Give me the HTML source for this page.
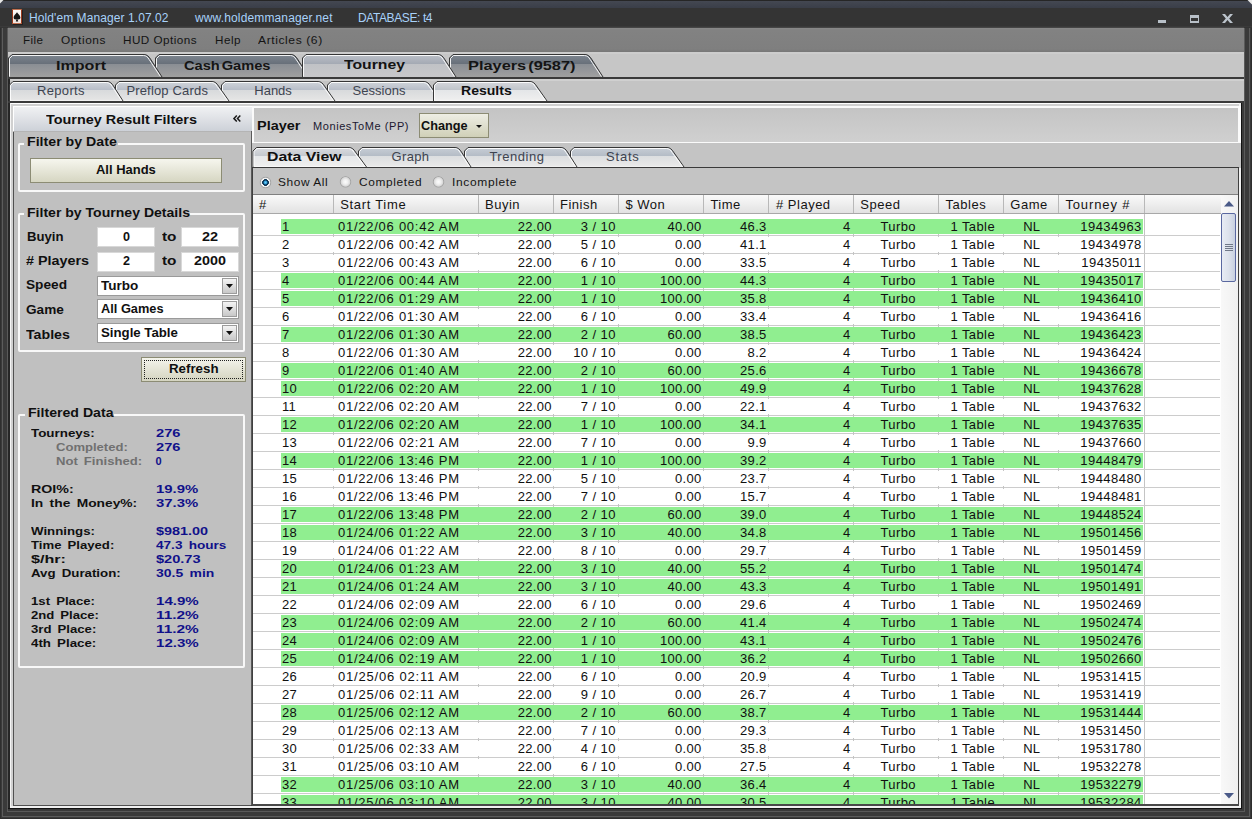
<!DOCTYPE html>
<html><head><meta charset="utf-8"><style>
html,body{margin:0;padding:0;width:1252px;height:819px;overflow:hidden;background:#3a3a3a}
body{position:relative;font-family:'Liberation Sans', sans-serif}
div{position:absolute}
svg{position:absolute}
</style></head><body>
<div style="left:0px;top:0px;width:1252px;height:819px;background:#3a3a3a"></div><div style="left:0px;top:0px;width:1252px;height:1px;background:#262626"></div><div style="left:0px;top:1px;width:1252px;height:7px;background:linear-gradient(#444852,#3a3e48)"></div><div style="left:0px;top:8px;width:1252px;height:20px;background:#343434"></div><div style="left:0px;top:28px;width:1px;height:791px;background:#2e2e2e"></div><div style="left:2px;top:28px;width:1px;height:789px;background:#5c5c5c"></div><div style="left:2px;top:816px;width:1248px;height:1px;background:#5c5c5c"></div><div style="left:1249px;top:28px;width:1px;height:789px;background:#5c5c5c"></div><div style="left:7px;top:28px;width:1px;height:784px;background:#5a5a5a"></div><div style="left:7px;top:811px;width:1238px;height:1px;background:#5a5a5a"></div><div style="left:1244px;top:28px;width:1px;height:784px;background:#5a5a5a"></div><div style="left:1251px;top:28px;width:1px;height:791px;background:#2e2e2e"></div><div style="left:0px;top:818px;width:1252px;height:1px;background:#2e2e2e"></div><div style="left:8px;top:28px;width:2px;height:781px;background:#262626"></div><div style="left:8px;top:808px;width:1234px;height:1px;background:#121212"></div><svg style="position:absolute;left:0;top:0" width="4" height="4"><path d="M0 0 L3.5 0 L0 3.5Z" fill="#e8e8e8"/></svg><svg style="position:absolute;left:1247px;top:0" width="5" height="5"><path d="M0.5 0 L5 0 L5 4.5Z" fill="#e8e8e8"/></svg><div style="left:13px;top:10px;width:10px;height:15px;background:#1a1a1a;opacity:0.7"></div><div style="left:12px;top:9px;width:10px;height:15px;background:linear-gradient(#fbf8f6,#f2e6e0);border-left:1px solid #9a3a1c;border-right:1px solid #9a3a1c;border-top:1px solid #c07050;border-bottom:1px solid #c07050;box-sizing:border-box"></div><svg style="position:absolute;left:12px;top:9px" width="10" height="15" viewBox="0 0 10 15"><path d="M5 3.2 C4 4.8 1.6 6.2 1.6 8.6 C1.6 10.3 3.3 11 4.5 10.1 L3.8 12.6 L6.2 12.6 L5.5 10.1 C6.7 11 8.4 10.3 8.4 8.6 C8.4 6.2 6 4.8 5 3.2Z" fill="#141414"/></svg><div style="left:29.00px;top:12px;font:12px/12px 'Liberation Sans', sans-serif;color:#a8d2fa;letter-spacing:0.081px;white-space:pre;">Hold&#x27;em Manager 1.07.02</div><div style="left:195.00px;top:12px;font:12px/12px 'Liberation Sans', sans-serif;color:#a8d2fa;letter-spacing:0.138px;white-space:pre;">www.holdemmanager.net</div><div style="left:358.00px;top:12px;font:12px/12px 'Liberation Sans', sans-serif;color:#a8d2fa;letter-spacing:-0.402px;white-space:pre;">DATABASE: t4</div><div style="left:1158px;top:20px;width:8px;height:3px;background:#b8c0c8"></div><div style="left:1190px;top:15px;width:9px;height:8px;border:1px solid #b8c0c8;border-top-width:3px;border-bottom-width:2px;box-sizing:border-box"></div><svg style="position:absolute;left:1222px;top:14px" width="11" height="9" viewBox="0 0 11 9"><path d="M0 0 L3 0 L5.5 3 L8 0 L11 0 L7.2 4.5 L11 9 L8 9 L5.5 6 L3 9 L0 9 L3.8 4.5Z" fill="#bcc4cc"/></svg><div style="left:8px;top:28px;width:1236px;height:24px;background:linear-gradient(#8a8a8a 0,#828282 2px,#7f7f7f 21px,#777777 24px)"></div><div style="left:0px;top:26px;width:1252px;height:1px;background:#3a3a3a"></div><div style="left:8px;top:27px;width:1236px;height:1px;background:#464646"></div><div style="left:23.40px;top:35px;font:11px/11px 'Liberation Sans', sans-serif;color:#141414;letter-spacing:0.361px;white-space:pre;transform:scaleX(1.0575);transform-origin:0 0;">File</div><div style="left:60.90px;top:35px;font:11px/11px 'Liberation Sans', sans-serif;color:#141414;letter-spacing:0.548px;white-space:pre;transform:scaleX(1.0798);transform-origin:0 0;">Options</div><div style="left:123.30px;top:35px;font:11px/11px 'Liberation Sans', sans-serif;color:#141414;letter-spacing:0.435px;white-space:pre;transform:scaleX(1.0629);transform-origin:0 0;">HUD Options</div><div style="left:214.60px;top:35px;font:11px/11px 'Liberation Sans', sans-serif;color:#141414;letter-spacing:0.479px;white-space:pre;transform:scaleX(1.0597);transform-origin:0 0;">Help</div><div style="left:258.20px;top:35px;font:11px/11px 'Liberation Sans', sans-serif;color:#141414;letter-spacing:0.529px;white-space:pre;transform:scaleX(1.0997);transform-origin:0 0;">Articles (6)</div><div style="left:8px;top:52px;width:1236px;height:25px;background:#c6c6c6"></div><div style="left:8px;top:52px;width:1236px;height:2px;background:#cccccc"></div><div style="left:8px;top:77px;width:1236px;height:2px;background:#3a3a3a"></div><div style="left:10px;top:79px;width:1234px;height:22px;background:#c4c4c4"></div><div style="left:10px;top:79px;width:1234px;height:2px;background:#d0d0d0"></div><div style="left:8px;top:101px;width:1236px;height:2px;background:#3a3a3a"></div><svg style="position:absolute;left:0px;top:54px" width="700" height="23" viewBox="0 0 700 23"><defs><linearGradient id="gu54" x1="0" y1="0" x2="0" y2="1"><stop offset="0" stop-color="#7e8690"/><stop offset="0.41" stop-color="#68707a"/><stop offset="0.43" stop-color="#8a8e94"/><stop offset="1" stop-color="#a0a0a0"/></linearGradient><linearGradient id="gs54" x1="0" y1="0" x2="0" y2="1"><stop offset="0" stop-color="#bcc0c8"/><stop offset="0.41" stop-color="#a4aab4"/><stop offset="0.43" stop-color="#c0c2c6"/><stop offset="1" stop-color="#c8c8ca"/></linearGradient></defs><path d="M449.5,23 L449.5,4.0 L453.0,0.5 L585,0.5 C588,0.5 590,2.5 591.5,5 L603,23 Z" fill="url(#gu54)"/><path d="M449.5,23 L449.5,4.0 L453.0,0.5 L585,0.5 C588,0.5 590,2.5 591.5,5 L603,23" fill="none" stroke="#363636" stroke-width="1"/><path d="M450.5,22.5 L450.5,4.5 L453.5,1.5 L584.5,1.5 C587,1.5 588.8,3.2 590.2,5.6 L601.4,22.5" fill="none" stroke="#ffffff" stroke-opacity="0.9" stroke-width="1"/><path d="M155.5,23 L155.5,4.0 L159.0,0.5 L291,0.5 C294,0.5 296,2.5 297.5,5 L309,23 Z" fill="url(#gu54)"/><path d="M155.5,23 L155.5,4.0 L159.0,0.5 L291,0.5 C294,0.5 296,2.5 297.5,5 L309,23" fill="none" stroke="#363636" stroke-width="1"/><path d="M156.5,22.5 L156.5,4.5 L159.5,1.5 L290.5,1.5 C293,1.5 294.8,3.2 296.2,5.6 L307.4,22.5" fill="none" stroke="#ffffff" stroke-opacity="0.9" stroke-width="1"/><path d="M8.5,23 L8.5,4.0 L12.0,0.5 L144,0.5 C147,0.5 149,2.5 150.5,5 L162,23 Z" fill="url(#gu54)"/><path d="M8.5,23 L8.5,4.0 L12.0,0.5 L144,0.5 C147,0.5 149,2.5 150.5,5 L162,23" fill="none" stroke="#363636" stroke-width="1"/><path d="M9.5,22.5 L9.5,4.5 L12.5,1.5 L143.5,1.5 C146,1.5 147.8,3.2 149.2,5.6 L160.4,22.5" fill="none" stroke="#ffffff" stroke-opacity="0.9" stroke-width="1"/><path d="M302.5,23 L302.5,4.0 L306.0,0.5 L438,0.5 C441,0.5 443,2.5 444.5,5 L456,23 Z" fill="url(#gs54)"/><path d="M302.5,23 L302.5,4.0 L306.0,0.5 L438,0.5 C441,0.5 443,2.5 444.5,5 L456,23" fill="none" stroke="#363636" stroke-width="1"/><path d="M303.5,22.5 L303.5,4.5 L306.5,1.5 L437.5,1.5 C440,1.5 441.8,3.2 443.2,5.6 L454.4,22.5" fill="none" stroke="#ffffff" stroke-opacity="0.9" stroke-width="1"/></svg><div style="left:55.80px;top:59px;font:bold 13px/13px 'Liberation Sans', sans-serif;color:#141414;letter-spacing:0.000px;white-space:pre;transform:scaleX(1.2385);transform-origin:0 0;">Import</div><div style="left:184.30px;top:59px;font:bold 13px/13px 'Liberation Sans', sans-serif;color:#141414;letter-spacing:0.000px;white-space:pre;word-spacing:-2px;transform:scaleX(1.1268);transform-origin:0 0;">Cash Games</div><div style="left:343.60px;top:58px;font:bold 13px/13px 'Liberation Sans', sans-serif;color:#141414;letter-spacing:0.000px;white-space:pre;transform:scaleX(1.2120);transform-origin:0 0;">Tourney</div><div style="left:468.30px;top:59px;font:bold 13px/13px 'Liberation Sans', sans-serif;color:#141414;letter-spacing:0.000px;white-space:pre;word-spacing:-2px;transform:scaleX(1.2580);transform-origin:0 0;">Players (9587)</div><svg style="position:absolute;left:0px;top:81px" width="700" height="20" viewBox="0 0 700 20"><defs><linearGradient id="gu81" x1="0" y1="0" x2="0" y2="1"><stop offset="0" stop-color="#d0d4da"/><stop offset="0.43" stop-color="#b8bec8"/><stop offset="0.45" stop-color="#d8dadc"/><stop offset="0.92" stop-color="#e4e4e4"/><stop offset="0.95" stop-color="#f0f0f0"/><stop offset="1" stop-color="#f0f0f0"/></linearGradient><linearGradient id="gs81" x1="0" y1="0" x2="0" y2="1"><stop offset="0" stop-color="#d6d8dc"/><stop offset="0.43" stop-color="#c0c4ca"/><stop offset="0.45" stop-color="#e4e6e8"/><stop offset="0.92" stop-color="#eeeeee"/><stop offset="0.95" stop-color="#f6f6f6"/><stop offset="1" stop-color="#f6f6f6"/></linearGradient></defs><path d="M327.5,20 L327.5,4.0 L331.0,0.5 L424,0.5 C427,0.5 429,2.5 430.5,5 L441,20 Z" fill="url(#gu81)"/><path d="M327.5,20 L327.5,4.0 L331.0,0.5 L424,0.5 C427,0.5 429,2.5 430.5,5 L441,20" fill="none" stroke="#363636" stroke-width="1"/><path d="M328.5,19.5 L328.5,4.5 L331.5,1.5 L423.5,1.5 C426,1.5 427.8,3.2 429.2,5.6 L439.4,19.5" fill="none" stroke="#ffffff" stroke-opacity="0.9" stroke-width="1"/><path d="M221.5,20 L221.5,4.0 L225.0,0.5 L318,0.5 C321,0.5 323,2.5 324.5,5 L335,20 Z" fill="url(#gu81)"/><path d="M221.5,20 L221.5,4.0 L225.0,0.5 L318,0.5 C321,0.5 323,2.5 324.5,5 L335,20" fill="none" stroke="#363636" stroke-width="1"/><path d="M222.5,19.5 L222.5,4.5 L225.5,1.5 L317.5,1.5 C320,1.5 321.8,3.2 323.2,5.6 L333.4,19.5" fill="none" stroke="#ffffff" stroke-opacity="0.9" stroke-width="1"/><path d="M115.5,20 L115.5,4.0 L119.0,0.5 L212,0.5 C215,0.5 217,2.5 218.5,5 L229,20 Z" fill="url(#gu81)"/><path d="M115.5,20 L115.5,4.0 L119.0,0.5 L212,0.5 C215,0.5 217,2.5 218.5,5 L229,20" fill="none" stroke="#363636" stroke-width="1"/><path d="M116.5,19.5 L116.5,4.5 L119.5,1.5 L211.5,1.5 C214,1.5 215.8,3.2 217.2,5.6 L227.4,19.5" fill="none" stroke="#ffffff" stroke-opacity="0.9" stroke-width="1"/><path d="M9.5,20 L9.5,4.0 L13.0,0.5 L107,0.5 C110,0.5 112,2.5 113.5,5 L123,20 Z" fill="url(#gu81)"/><path d="M9.5,20 L9.5,4.0 L13.0,0.5 L107,0.5 C110,0.5 112,2.5 113.5,5 L123,20" fill="none" stroke="#363636" stroke-width="1"/><path d="M10.5,19.5 L10.5,4.5 L13.5,1.5 L106.5,1.5 C109,1.5 110.8,3.2 112.2,5.6 L121.4,19.5" fill="none" stroke="#ffffff" stroke-opacity="0.9" stroke-width="1"/><path d="M433.5,20 L433.5,4.0 L437.0,0.5 L530,0.5 C533,0.5 535,2.5 536.5,5 L547,20 Z" fill="url(#gs81)"/><path d="M433.5,20 L433.5,4.0 L437.0,0.5 L530,0.5 C533,0.5 535,2.5 536.5,5 L547,20" fill="none" stroke="#363636" stroke-width="1"/><path d="M434.5,19.5 L434.5,4.5 L437.5,1.5 L529.5,1.5 C532,1.5 533.8,3.2 535.2,5.6 L545.4,19.5" fill="none" stroke="#ffffff" stroke-opacity="0.9" stroke-width="1"/></svg><div style="left:37.00px;top:84px;font:13px/13px 'Liberation Sans', sans-serif;color:#3e4450;letter-spacing:0.328px;white-space:pre;">Reports</div><div style="left:126.40px;top:84px;font:13px/13px 'Liberation Sans', sans-serif;color:#3e4450;letter-spacing:0.168px;white-space:pre;">Preflop Cards</div><div style="left:254.30px;top:84px;font:13px/13px 'Liberation Sans', sans-serif;color:#3e4450;letter-spacing:-0.020px;white-space:pre;">Hands</div><div style="left:352.50px;top:84px;font:13px/13px 'Liberation Sans', sans-serif;color:#3e4450;letter-spacing:0.036px;white-space:pre;">Sessions</div><div style="left:460.70px;top:84px;font:bold 13px/13px 'Liberation Sans', sans-serif;color:#101010;letter-spacing:0.000px;white-space:pre;transform:scaleX(1.0794);transform-origin:0 0;">Results</div><div style="left:10px;top:103px;width:1232px;height:702px;background:#c4c4c4"></div><div style="left:10px;top:103px;width:1232px;height:1px;background:#ffffff"></div><div style="left:10px;top:104px;width:1232px;height:2px;background:#d0d0d0"></div><div style="left:10px;top:806px;width:1232px;height:2px;background:#f0f0f0"></div><div style="left:10px;top:103px;width:1px;height:705px;background:#f4f4f4"></div><div style="left:11px;top:104px;width:2px;height:702px;background:#d0d0d0"></div><div style="left:1239px;top:103px;width:2px;height:705px;background:#f0f0f0"></div><div style="left:1241px;top:103px;width:1px;height:706px;background:#121212"></div><div style="left:13px;top:106px;width:238px;height:699px;background:#c0c0c0;border-left:1px solid #505050;box-sizing:border-box"></div><div style="left:13px;top:106px;width:239px;height:25px;background:linear-gradient(#f0f1f3,#cdd1d8);border-top:1px solid #fff;border-left:1px solid #fff;box-sizing:border-box"></div><div style="left:13px;top:131px;width:238px;height:1px;background:#b4b4b4"></div><div style="left:251px;top:131px;width:1px;height:674px;background:#5a5a5a"></div><div style="left:13px;top:805px;width:238px;height:1px;background:#505050"></div><div style="left:45.50px;top:113px;font:bold 13px/13px 'Liberation Sans', sans-serif;color:#101010;letter-spacing:0.000px;white-space:pre;transform:scaleX(1.1079);transform-origin:0 0;">Tourney Result Filters</div><svg style="position:absolute;left:233px;top:115px" width="8" height="8" viewBox="0 0 8 8"><path d="M3.8 0.6 L1 3.6 L3.8 6.6 M7.3 0.6 L4.5 3.6 L7.3 6.6" fill="none" stroke="#1a1a1a" stroke-width="1.5"/></svg><div style="left:18px;top:143px;width:227px;height:49px;border:2px solid #f8f8f8;border-radius:2px;box-sizing:border-box;border-top-color:#f8f8f8"></div><div style="left:24px;top:143px;width:94px;height:3px;background:#c0c0c0"></div><div style="left:26.50px;top:136px;font:bold 12px/12px 'Liberation Sans', sans-serif;color:#101010;letter-spacing:0.000px;white-space:pre;transform:scaleX(1.1811);transform-origin:0 0;">Filter by Date</div><div style="left:30px;top:158px;width:192px;height:25px;background:linear-gradient(#f6f6ee,#d6d6c2);border:1px solid #8c8c74;box-sizing:border-box"></div><div style="left:96.10px;top:164px;font:bold 12px/12px 'Liberation Sans', sans-serif;color:#101010;letter-spacing:0.000px;white-space:pre;transform:scaleX(1.0805);transform-origin:0 0;">All Hands</div><div style="left:18px;top:213px;width:227px;height:139px;border:2px solid #f8f8f8;border-radius:2px;box-sizing:border-box;border-top-color:#f8f8f8"></div><div style="left:24px;top:213px;width:166px;height:3px;background:#c0c0c0"></div><div style="left:26.50px;top:207px;font:bold 12px/12px 'Liberation Sans', sans-serif;color:#101010;letter-spacing:0.000px;white-space:pre;transform:scaleX(1.1713);transform-origin:0 0;">Filter by Tourney Details</div><div style="left:26.70px;top:231px;font:bold 12px/12px 'Liberation Sans', sans-serif;color:#101010;letter-spacing:0.000px;white-space:pre;transform:scaleX(1.0947);transform-origin:0 0;">Buyin</div><div style="left:26.40px;top:255px;font:bold 12px/12px 'Liberation Sans', sans-serif;color:#101010;letter-spacing:0.000px;white-space:pre;transform:scaleX(1.1950);transform-origin:0 0;"># Players</div><div style="left:97px;top:227px;width:58px;height:20px;background:#fff;border:1px solid #d8d8d8;box-sizing:border-box"></div><div style="left:122.50px;top:231px;font:bold 12px/12px 'Liberation Sans', sans-serif;color:#101010;letter-spacing:0.000px;white-space:pre;transform:scaleX(1.0467);transform-origin:0 0;">0</div><div style="left:181px;top:227px;width:58px;height:20px;background:#fff;border:1px solid #d8d8d8;box-sizing:border-box"></div><div style="left:201.95px;top:231px;font:bold 12px/12px 'Liberation Sans', sans-serif;color:#101010;letter-spacing:0.000px;white-space:pre;transform:scaleX(1.2051);transform-origin:0 0;">22</div><div style="left:97px;top:252px;width:58px;height:20px;background:#fff;border:1px solid #d8d8d8;box-sizing:border-box"></div><div style="left:122.50px;top:255px;font:bold 12px/12px 'Liberation Sans', sans-serif;color:#101010;letter-spacing:0.000px;white-space:pre;transform:scaleX(1.0467);transform-origin:0 0;">2</div><div style="left:181px;top:252px;width:58px;height:20px;background:#fff;border:1px solid #d8d8d8;box-sizing:border-box"></div><div style="left:194.05px;top:255px;font:bold 12px/12px 'Liberation Sans', sans-serif;color:#101010;letter-spacing:0.000px;white-space:pre;transform:scaleX(1.1946);transform-origin:0 0;">2000</div><div style="left:161.70px;top:231px;font:bold 12px/12px 'Liberation Sans', sans-serif;color:#101010;letter-spacing:0.000px;white-space:pre;transform:scaleX(1.2800);transform-origin:0 0;">to</div><div style="left:161.70px;top:255px;font:bold 12px/12px 'Liberation Sans', sans-serif;color:#101010;letter-spacing:0.000px;white-space:pre;transform:scaleX(1.2800);transform-origin:0 0;">to</div><div style="left:26.40px;top:279px;font:bold 12px/12px 'Liberation Sans', sans-serif;color:#101010;letter-spacing:0.000px;white-space:pre;transform:scaleX(1.1384);transform-origin:0 0;">Speed</div><div style="left:97px;top:276px;width:142px;height:20px;background:#fff;border:1px solid #9a9a9a;box-sizing:border-box"></div><div style="left:222px;top:278px;width:15px;height:16px;background:linear-gradient(#f4f4f4,#c8c8c8);border:1px solid #9c9c9c;box-sizing:border-box"></div><svg style="position:absolute;left:226px;top:284px" width="7" height="4" viewBox="0 0 7 4"><path d="M0 0 L7 0 L3.5 4Z" fill="#101010"/></svg><div style="left:100.50px;top:280px;font:bold 12px/12px 'Liberation Sans', sans-serif;color:#101010;letter-spacing:0.000px;white-space:pre;transform:scaleX(1.1266);transform-origin:0 0;">Turbo</div><div style="left:26.40px;top:304px;font:bold 12px/12px 'Liberation Sans', sans-serif;color:#101010;letter-spacing:0.000px;white-space:pre;transform:scaleX(1.1331);transform-origin:0 0;">Game</div><div style="left:97px;top:299px;width:142px;height:20px;background:#fff;border:1px solid #9a9a9a;box-sizing:border-box"></div><div style="left:222px;top:301px;width:15px;height:16px;background:linear-gradient(#f4f4f4,#c8c8c8);border:1px solid #9c9c9c;box-sizing:border-box"></div><svg style="position:absolute;left:226px;top:307px" width="7" height="4" viewBox="0 0 7 4"><path d="M0 0 L7 0 L3.5 4Z" fill="#101010"/></svg><div style="left:100.50px;top:303px;font:bold 12px/12px 'Liberation Sans', sans-serif;color:#101010;letter-spacing:0.000px;white-space:pre;transform:scaleX(1.0647);transform-origin:0 0;">All Games</div><div style="left:26.40px;top:329px;font:bold 12px/12px 'Liberation Sans', sans-serif;color:#101010;letter-spacing:0.000px;white-space:pre;transform:scaleX(1.1825);transform-origin:0 0;">Tables</div><div style="left:97px;top:323px;width:142px;height:20px;background:#fff;border:1px solid #9a9a9a;box-sizing:border-box"></div><div style="left:222px;top:325px;width:15px;height:16px;background:linear-gradient(#f4f4f4,#c8c8c8);border:1px solid #9c9c9c;box-sizing:border-box"></div><svg style="position:absolute;left:226px;top:331px" width="7" height="4" viewBox="0 0 7 4"><path d="M0 0 L7 0 L3.5 4Z" fill="#101010"/></svg><div style="left:100.50px;top:327px;font:bold 12px/12px 'Liberation Sans', sans-serif;color:#101010;letter-spacing:0.000px;white-space:pre;transform:scaleX(1.1018);transform-origin:0 0;">Single Table</div><div style="left:141px;top:357px;width:105px;height:25px;background:linear-gradient(#f4f4ec,#d4d4c0);border:1px solid #8c8c74;box-sizing:border-box"></div><div style="left:144px;top:360px;width:99px;height:19px;border:1px dotted #202020;box-sizing:border-box"></div><div style="left:169.40px;top:363px;font:bold 12px/12px 'Liberation Sans', sans-serif;color:#101010;letter-spacing:0.000px;white-space:pre;transform:scaleX(1.1077);transform-origin:0 0;">Refresh</div><div style="left:18px;top:414px;width:227px;height:254px;border:2px solid #f8f8f8;border-radius:2px;box-sizing:border-box;border-top-color:#f8f8f8"></div><div style="left:25px;top:414px;width:89px;height:3px;background:#c0c0c0"></div><div style="left:27.50px;top:407px;font:bold 12px/12px 'Liberation Sans', sans-serif;color:#101010;letter-spacing:0.000px;white-space:pre;transform:scaleX(1.1763);transform-origin:0 0;">Filtered Data</div><div style="left:30.70px;top:428px;font:bold 11px/11px 'Liberation Sans', sans-serif;color:#101010;letter-spacing:0.000px;white-space:pre;transform:scaleX(1.2166);transform-origin:0 0;">Tourneys:</div><div style="left:155.50px;top:428px;font:bold 11px/11px 'Liberation Sans', sans-serif;color:#10108a;letter-spacing:0.000px;white-space:pre;transform:scaleX(1.3290);transform-origin:0 0;">276</div><div style="left:55.60px;top:442px;font:bold 11px/11px 'Liberation Sans', sans-serif;color:#707070;letter-spacing:0.000px;white-space:pre;transform:scaleX(1.1868);transform-origin:0 0;">Completed:</div><div style="left:155.50px;top:442px;font:bold 11px/11px 'Liberation Sans', sans-serif;color:#10108a;letter-spacing:0.000px;white-space:pre;transform:scaleX(1.3290);transform-origin:0 0;">276</div><div style="left:55.60px;top:456px;font:bold 11px/11px 'Liberation Sans', sans-serif;color:#707070;letter-spacing:0.000px;white-space:pre;word-spacing:2px;transform:scaleX(1.1912);transform-origin:0 0;">Not Finished:</div><div style="left:155.50px;top:456px;font:bold 11px/11px 'Liberation Sans', sans-serif;color:#10108a;letter-spacing:0.000px;white-space:pre;">0</div><div style="left:30.70px;top:484px;font:bold 11px/11px 'Liberation Sans', sans-serif;color:#101010;letter-spacing:0.000px;white-space:pre;transform:scaleX(1.2939);transform-origin:0 0;">ROI%:</div><div style="left:155.50px;top:484px;font:bold 11px/11px 'Liberation Sans', sans-serif;color:#10108a;letter-spacing:0.000px;white-space:pre;transform:scaleX(1.3524);transform-origin:0 0;">19.9%</div><div style="left:30.70px;top:498px;font:bold 11px/11px 'Liberation Sans', sans-serif;color:#101010;letter-spacing:0.000px;white-space:pre;word-spacing:2px;transform:scaleX(1.2543);transform-origin:0 0;">In the Money%:</div><div style="left:155.50px;top:498px;font:bold 11px/11px 'Liberation Sans', sans-serif;color:#10108a;letter-spacing:0.000px;white-space:pre;transform:scaleX(1.3524);transform-origin:0 0;">37.3%</div><div style="left:30.50px;top:526px;font:bold 11px/11px 'Liberation Sans', sans-serif;color:#101010;letter-spacing:0.000px;white-space:pre;transform:scaleX(1.2061);transform-origin:0 0;">Winnings:</div><div style="left:155.50px;top:526px;font:bold 11px/11px 'Liberation Sans', sans-serif;color:#10108a;letter-spacing:0.000px;white-space:pre;transform:scaleX(1.3077);transform-origin:0 0;">$981.00</div><div style="left:30.50px;top:540px;font:bold 11px/11px 'Liberation Sans', sans-serif;color:#101010;letter-spacing:0.000px;white-space:pre;word-spacing:2px;transform:scaleX(1.1956);transform-origin:0 0;">Time Played:</div><div style="left:155.50px;top:540px;font:bold 11px/11px 'Liberation Sans', sans-serif;color:#10108a;letter-spacing:0.000px;white-space:pre;word-spacing:2px;transform:scaleX(1.2344);transform-origin:0 0;">47.3 hours</div><div style="left:30.50px;top:554px;font:bold 11px/11px 'Liberation Sans', sans-serif;color:#101010;letter-spacing:0.000px;white-space:pre;transform:scaleX(1.4679);transform-origin:0 0;">$/hr:</div><div style="left:155.50px;top:554px;font:bold 11px/11px 'Liberation Sans', sans-serif;color:#10108a;letter-spacing:0.000px;white-space:pre;transform:scaleX(1.3252);transform-origin:0 0;">$20.73</div><div style="left:30.50px;top:568px;font:bold 11px/11px 'Liberation Sans', sans-serif;color:#101010;letter-spacing:0.000px;white-space:pre;word-spacing:2px;transform:scaleX(1.2071);transform-origin:0 0;">Avg Duration:</div><div style="left:155.50px;top:568px;font:bold 11px/11px 'Liberation Sans', sans-serif;color:#10108a;letter-spacing:0.000px;white-space:pre;word-spacing:2px;transform:scaleX(1.2687);transform-origin:0 0;">30.5 min</div><div style="left:30.50px;top:596px;font:bold 11px/11px 'Liberation Sans', sans-serif;color:#101010;letter-spacing:0.000px;white-space:pre;word-spacing:2px;transform:scaleX(1.1991);transform-origin:0 0;">1st Place:</div><div style="left:155.50px;top:596px;font:bold 11px/11px 'Liberation Sans', sans-serif;color:#10108a;letter-spacing:0.000px;white-space:pre;transform:scaleX(1.3717);transform-origin:0 0;">14.9%</div><div style="left:30.50px;top:610px;font:bold 11px/11px 'Liberation Sans', sans-serif;color:#101010;letter-spacing:0.000px;white-space:pre;word-spacing:2px;transform:scaleX(1.1923);transform-origin:0 0;">2nd Place:</div><div style="left:155.50px;top:610px;font:bold 11px/11px 'Liberation Sans', sans-serif;color:#10108a;letter-spacing:0.000px;white-space:pre;transform:scaleX(1.3990);transform-origin:0 0;">11.2%</div><div style="left:30.50px;top:624px;font:bold 11px/11px 'Liberation Sans', sans-serif;color:#101010;letter-spacing:0.000px;white-space:pre;word-spacing:2px;transform:scaleX(1.1961);transform-origin:0 0;">3rd Place:</div><div style="left:155.50px;top:624px;font:bold 11px/11px 'Liberation Sans', sans-serif;color:#10108a;letter-spacing:0.000px;white-space:pre;transform:scaleX(1.3990);transform-origin:0 0;">11.2%</div><div style="left:30.50px;top:638px;font:bold 11px/11px 'Liberation Sans', sans-serif;color:#101010;letter-spacing:0.000px;white-space:pre;word-spacing:2px;transform:scaleX(1.2100);transform-origin:0 0;">4th Place:</div><div style="left:155.50px;top:638px;font:bold 11px/11px 'Liberation Sans', sans-serif;color:#10108a;letter-spacing:0.000px;white-space:pre;transform:scaleX(1.3717);transform-origin:0 0;">12.3%</div><div style="left:252px;top:106px;width:989px;height:38px;background:linear-gradient(#c4c4c4,#d0d0d0);border:2px solid #fafafa;border-right-width:3px;box-sizing:border-box"></div><div style="left:257.00px;top:119px;font:bold 13px/13px 'Liberation Sans', sans-serif;color:#101010;letter-spacing:0.000px;white-space:pre;transform:scaleX(1.1140);transform-origin:0 0;">Player</div><div style="left:313.00px;top:121px;font:11px/11px 'Liberation Sans', sans-serif;color:#201830;letter-spacing:0.577px;white-space:pre;">MoniesToMe (PP)</div><div style="left:419px;top:113px;width:70px;height:25px;background:linear-gradient(#eeeee4,#d0d0b8);border:1px solid #8c8c74;box-sizing:border-box"></div><div style="left:420.80px;top:120px;font:bold 12px/12px 'Liberation Sans', sans-serif;color:#101010;letter-spacing:0.000px;white-space:pre;transform:scaleX(1.0564);transform-origin:0 0;">Change</div><svg style="position:absolute;left:476px;top:125px" width="6" height="3" viewBox="0 0 6 3"><path d="M0 0 L6 0 L3 3Z" fill="#101010"/></svg><div style="left:252px;top:143px;width:989px;height:25px;background:#c4c4c4"></div><div style="left:252px;top:167px;width:987px;height:1px;background:#3a3a3a"></div><svg style="position:absolute;left:252px;top:147px" width="460" height="20" viewBox="0 0 460 20"><defs><linearGradient id="gu147" x1="0" y1="0" x2="0" y2="1"><stop offset="0" stop-color="#c8ced6"/><stop offset="0.43" stop-color="#b4bcc6"/><stop offset="0.45" stop-color="#dcdee0"/><stop offset="0.92" stop-color="#e8e8e8"/><stop offset="0.95" stop-color="#f0f0f0"/><stop offset="1" stop-color="#f0f0f0"/></linearGradient><linearGradient id="gs147" x1="0" y1="0" x2="0" y2="1"><stop offset="0" stop-color="#dadce0"/><stop offset="0.43" stop-color="#c4c8ce"/><stop offset="0.45" stop-color="#e6e8ea"/><stop offset="0.92" stop-color="#eeeeee"/><stop offset="0.95" stop-color="#f8f8f8"/><stop offset="1" stop-color="#f8f8f8"/></linearGradient></defs><path d="M318.5,20 L318.5,4.0 L322.0,0.5 L415,0.5 C418,0.5 420,2.5 421.5,5 L432,20 Z" fill="url(#gu147)"/><path d="M318.5,20 L318.5,4.0 L322.0,0.5 L415,0.5 C418,0.5 420,2.5 421.5,5 L432,20" fill="none" stroke="#363636" stroke-width="1"/><path d="M319.5,19.5 L319.5,4.5 L322.5,1.5 L414.5,1.5 C417,1.5 418.8,3.2 420.2,5.6 L430.4,19.5" fill="none" stroke="#ffffff" stroke-opacity="0.9" stroke-width="1"/><path d="M212.5,20 L212.5,4.0 L216.0,0.5 L309,0.5 C312,0.5 314,2.5 315.5,5 L325,20 Z" fill="url(#gu147)"/><path d="M212.5,20 L212.5,4.0 L216.0,0.5 L309,0.5 C312,0.5 314,2.5 315.5,5 L325,20" fill="none" stroke="#363636" stroke-width="1"/><path d="M213.5,19.5 L213.5,4.5 L216.5,1.5 L308.5,1.5 C311,1.5 312.8,3.2 314.2,5.6 L323.4,19.5" fill="none" stroke="#ffffff" stroke-opacity="0.9" stroke-width="1"/><path d="M106.5,20 L106.5,4.0 L110.0,0.5 L203,0.5 C206,0.5 208,2.5 209.5,5 L219,20 Z" fill="url(#gu147)"/><path d="M106.5,20 L106.5,4.0 L110.0,0.5 L203,0.5 C206,0.5 208,2.5 209.5,5 L219,20" fill="none" stroke="#363636" stroke-width="1"/><path d="M107.5,19.5 L107.5,4.5 L110.5,1.5 L202.5,1.5 C205,1.5 206.8,3.2 208.2,5.6 L217.4,19.5" fill="none" stroke="#ffffff" stroke-opacity="0.9" stroke-width="1"/><path d="M1.0,20 L1.0,4.0 L4.5,0.5 L97,0.5 C100,0.5 102,2.5 103.5,5 L114.5,20 Z" fill="url(#gs147)"/><path d="M1.0,20 L1.0,4.0 L4.5,0.5 L97,0.5 C100,0.5 102,2.5 103.5,5 L114.5,20" fill="none" stroke="#363636" stroke-width="1"/><path d="M2.0,19.5 L2.0,4.5 L5.0,1.5 L96.5,1.5 C99,1.5 100.8,3.2 102.2,5.6 L112.9,19.5" fill="none" stroke="#ffffff" stroke-opacity="0.9" stroke-width="1"/></svg><div style="left:267.00px;top:150px;font:bold 13px/13px 'Liberation Sans', sans-serif;color:#101010;letter-spacing:0.000px;white-space:pre;transform:scaleX(1.2176);transform-origin:0 0;">Data View</div><div style="left:391.60px;top:150px;font:13px/13px 'Liberation Sans', sans-serif;color:#3e4450;letter-spacing:0.340px;white-space:pre;">Graph</div><div style="left:489.40px;top:150px;font:13px/13px 'Liberation Sans', sans-serif;color:#3e4450;letter-spacing:0.525px;white-space:pre;">Trending</div><div style="left:606.10px;top:150px;font:13px/13px 'Liberation Sans', sans-serif;color:#3e4450;letter-spacing:0.769px;white-space:pre;">Stats</div><div style="left:252px;top:168px;width:987px;height:637px;background:#c4c4c4;border-left:1px solid #404040;box-sizing:border-box"></div><div style="left:1238px;top:168px;width:1px;height:637px;background:#404040"></div><div style="left:252px;top:804px;width:987px;height:2px;background:#484848"></div><div style="left:258.5px;top:175.5px;width:13px;height:13px;border-radius:50%;background:radial-gradient(circle at 50% 50%,#70d0f4 0,#2a98d8 1.6px,#0c3454 2.3px,#0c3454 3.1px,#f8f8f8 3.6px,#e8e8e8 4.6px,#9c9c9c 5.2px,rgba(160,160,160,0.4) 5.7px,rgba(196,196,196,0) 6.2px)"></div><div style="left:338.5px;top:175.5px;width:13px;height:13px;border-radius:50%;background:radial-gradient(circle at 50% 45%,#fcfcfc 0,#eeeeee 2.5px,#d8d8d8 4.4px,#a4a4a4 5.2px,rgba(160,160,160,0.4) 5.7px,rgba(196,196,196,0) 6.2px)"></div><div style="left:431.5px;top:175.5px;width:13px;height:13px;border-radius:50%;background:radial-gradient(circle at 50% 45%,#fcfcfc 0,#eeeeee 2.5px,#d8d8d8 4.4px,#a4a4a4 5.2px,rgba(160,160,160,0.4) 5.7px,rgba(196,196,196,0) 6.2px)"></div><div style="left:278.40px;top:177px;font:11px/11px 'Liberation Sans', sans-serif;color:#141414;letter-spacing:0.535px;white-space:pre;transform:scaleX(1.0816);transform-origin:0 0;">Show All</div><div style="left:358.60px;top:177px;font:11px/11px 'Liberation Sans', sans-serif;color:#141414;letter-spacing:0.581px;white-space:pre;transform:scaleX(1.0804);transform-origin:0 0;">Completed</div><div style="left:451.60px;top:177px;font:11px/11px 'Liberation Sans', sans-serif;color:#141414;letter-spacing:0.594px;white-space:pre;transform:scaleX(1.0903);transform-origin:0 0;">Incomplete</div><div style="left:253px;top:194px;width:985px;height:1px;background:#808080"></div><div style="left:253px;top:195px;width:968px;height:18px;background:linear-gradient(#fafafa,#e2e2e2)"></div><div style="left:253px;top:213px;width:968px;height:1px;background:#a8a8a8"></div><div style="left:253px;top:214px;width:968px;height:590px;background:#ffffff"></div><div style="left:1221px;top:195px;width:17px;height:609px;background:linear-gradient(90deg,#f8f8f8,#f0f0f0)"></div><svg style="position:absolute;left:1224px;top:201px" width="10" height="6" viewBox="0 0 10 6"><path d="M0 5.5 L10 5.5 L5 0Z" fill="#4a5a88"/></svg><svg style="position:absolute;left:1224px;top:793px" width="10" height="6" viewBox="0 0 10 6"><path d="M0 0 L10 0 L5 5.5Z" fill="#4a5a88"/></svg><div style="left:1221px;top:213px;width:15px;height:69px;background:linear-gradient(90deg,#e8ecf4,#dde2ec 50%,#c8d0e0);border:1px solid #5a68a0;border-radius:2px;box-sizing:border-box"></div><div style="left:1225px;top:244px;width:8px;height:1px;background:#707888"></div><div style="left:1225px;top:246px;width:8px;height:1px;background:#707888"></div><div style="left:1225px;top:248px;width:8px;height:1px;background:#707888"></div><div style="left:1225px;top:250px;width:8px;height:1px;background:#707888"></div><div style="left:333px;top:195px;width:1px;height:18px;background:#b8b8b8"></div><div style="left:478px;top:195px;width:1px;height:18px;background:#b8b8b8"></div><div style="left:553px;top:195px;width:1px;height:18px;background:#b8b8b8"></div><div style="left:618px;top:195px;width:1px;height:18px;background:#b8b8b8"></div><div style="left:703px;top:195px;width:1px;height:18px;background:#b8b8b8"></div><div style="left:768px;top:195px;width:1px;height:18px;background:#b8b8b8"></div><div style="left:853px;top:195px;width:1px;height:18px;background:#b8b8b8"></div><div style="left:938px;top:195px;width:1px;height:18px;background:#b8b8b8"></div><div style="left:1003px;top:195px;width:1px;height:18px;background:#b8b8b8"></div><div style="left:1058px;top:195px;width:1px;height:18px;background:#b8b8b8"></div><div style="left:1144px;top:195px;width:1px;height:18px;background:#b8b8b8"></div><div style="left:1144px;top:214px;width:1px;height:590px;background:#c4c4c4"></div><div style="left:259.00px;top:198px;font:13px/13px 'Liberation Sans', sans-serif;color:#141414;letter-spacing:0.500px;white-space:pre;">#</div><div style="left:340.20px;top:198px;font:13px/13px 'Liberation Sans', sans-serif;color:#141414;letter-spacing:0.694px;white-space:pre;">Start Time</div><div style="left:485.00px;top:198px;font:13px/13px 'Liberation Sans', sans-serif;color:#141414;letter-spacing:0.500px;white-space:pre;">Buyin</div><div style="left:560.00px;top:198px;font:13px/13px 'Liberation Sans', sans-serif;color:#141414;letter-spacing:0.500px;white-space:pre;">Finish</div><div style="left:625.40px;top:198px;font:13px/13px 'Liberation Sans', sans-serif;color:#141414;letter-spacing:0.500px;white-space:pre;">$ Won</div><div style="left:710.40px;top:198px;font:13px/13px 'Liberation Sans', sans-serif;color:#141414;letter-spacing:0.500px;white-space:pre;">Time</div><div style="left:776.00px;top:198px;font:13px/13px 'Liberation Sans', sans-serif;color:#141414;letter-spacing:0.500px;white-space:pre;"># Played</div><div style="left:860.30px;top:198px;font:13px/13px 'Liberation Sans', sans-serif;color:#141414;letter-spacing:0.500px;white-space:pre;">Speed</div><div style="left:945.60px;top:198px;font:13px/13px 'Liberation Sans', sans-serif;color:#141414;letter-spacing:0.500px;white-space:pre;">Tables</div><div style="left:1010.30px;top:198px;font:13px/13px 'Liberation Sans', sans-serif;color:#141414;letter-spacing:0.500px;white-space:pre;">Game</div><div style="left:1065.40px;top:198px;font:13px/13px 'Liberation Sans', sans-serif;color:#141414;letter-spacing:0.876px;white-space:pre;">Tourney #</div><div style="left:253px;top:214px;width:968px;height:590px;overflow:hidden"><div style="left:28px;top:5px;width:862px;height:15px;background:#90ee90"></div><div style="left:0px;top:21px;width:967px;height:1px;background:#cccccc"></div><div style="left:80px;top:20px;width:1px;height:3px;background:#c4c4c4"></div><div style="left:225px;top:20px;width:1px;height:3px;background:#c4c4c4"></div><div style="left:300px;top:20px;width:1px;height:3px;background:#c4c4c4"></div><div style="left:365px;top:20px;width:1px;height:3px;background:#c4c4c4"></div><div style="left:450px;top:20px;width:1px;height:3px;background:#c4c4c4"></div><div style="left:515px;top:20px;width:1px;height:3px;background:#c4c4c4"></div><div style="left:600px;top:20px;width:1px;height:3px;background:#c4c4c4"></div><div style="left:685px;top:20px;width:1px;height:3px;background:#c4c4c4"></div><div style="left:750px;top:20px;width:1px;height:3px;background:#c4c4c4"></div><div style="left:805px;top:20px;width:1px;height:3px;background:#c4c4c4"></div><div style="left:29.00px;top:6px;font:13px/13px 'Liberation Sans', sans-serif;color:#101010;letter-spacing:0.300px;white-space:pre;">1</div><div style="left:85.00px;top:6px;font:13px/13px 'Liberation Sans', sans-serif;color:#101010;letter-spacing:0.740px;white-space:pre;">01/22/06 00:42 AM</div><div style="left:264.75px;top:6px;font:13px/13px 'Liberation Sans', sans-serif;color:#101010;letter-spacing:0.300px;white-space:pre;">22.00</div><div style="left:327.87px;top:6px;font:13px/13px 'Liberation Sans', sans-serif;color:#101010;letter-spacing:0.400px;white-space:pre;">3 / 10</div><div style="left:414.55px;top:6px;font:13px/13px 'Liberation Sans', sans-serif;color:#101010;letter-spacing:0.300px;white-space:pre;">40.00</div><div style="left:487.09px;top:6px;font:13px/13px 'Liberation Sans', sans-serif;color:#101010;letter-spacing:0.300px;white-space:pre;">46.3</div><div style="left:589.97px;top:6px;font:13px/13px 'Liberation Sans', sans-serif;color:#101010;letter-spacing:0.000px;white-space:pre;">4</div><div style="left:627.46px;top:6px;font:13px/13px 'Liberation Sans', sans-serif;color:#101010;letter-spacing:0.400px;white-space:pre;">Turbo</div><div style="left:697.56px;top:6px;font:13px/13px 'Liberation Sans', sans-serif;color:#101010;letter-spacing:0.400px;white-space:pre;">1 Table</div><div style="left:770.14px;top:6px;font:13px/13px 'Liberation Sans', sans-serif;color:#101010;letter-spacing:0.300px;white-space:pre;">NL</div><div style="left:827.31px;top:6px;font:13px/13px 'Liberation Sans', sans-serif;color:#101010;letter-spacing:0.450px;white-space:pre;">19434963</div><div style="left:0px;top:39px;width:967px;height:1px;background:#cccccc"></div><div style="left:80px;top:38px;width:1px;height:3px;background:#c4c4c4"></div><div style="left:225px;top:38px;width:1px;height:3px;background:#c4c4c4"></div><div style="left:300px;top:38px;width:1px;height:3px;background:#c4c4c4"></div><div style="left:365px;top:38px;width:1px;height:3px;background:#c4c4c4"></div><div style="left:450px;top:38px;width:1px;height:3px;background:#c4c4c4"></div><div style="left:515px;top:38px;width:1px;height:3px;background:#c4c4c4"></div><div style="left:600px;top:38px;width:1px;height:3px;background:#c4c4c4"></div><div style="left:685px;top:38px;width:1px;height:3px;background:#c4c4c4"></div><div style="left:750px;top:38px;width:1px;height:3px;background:#c4c4c4"></div><div style="left:805px;top:38px;width:1px;height:3px;background:#c4c4c4"></div><div style="left:29.00px;top:24px;font:13px/13px 'Liberation Sans', sans-serif;color:#101010;letter-spacing:0.300px;white-space:pre;">2</div><div style="left:85.00px;top:24px;font:13px/13px 'Liberation Sans', sans-serif;color:#101010;letter-spacing:0.740px;white-space:pre;">01/22/06 00:42 AM</div><div style="left:264.75px;top:24px;font:13px/13px 'Liberation Sans', sans-serif;color:#101010;letter-spacing:0.300px;white-space:pre;">22.00</div><div style="left:327.87px;top:24px;font:13px/13px 'Liberation Sans', sans-serif;color:#101010;letter-spacing:0.400px;white-space:pre;">5 / 10</div><div style="left:422.09px;top:24px;font:13px/13px 'Liberation Sans', sans-serif;color:#101010;letter-spacing:0.300px;white-space:pre;">0.00</div><div style="left:487.09px;top:24px;font:13px/13px 'Liberation Sans', sans-serif;color:#101010;letter-spacing:0.300px;white-space:pre;">41.1</div><div style="left:589.97px;top:24px;font:13px/13px 'Liberation Sans', sans-serif;color:#101010;letter-spacing:0.000px;white-space:pre;">4</div><div style="left:627.46px;top:24px;font:13px/13px 'Liberation Sans', sans-serif;color:#101010;letter-spacing:0.400px;white-space:pre;">Turbo</div><div style="left:697.56px;top:24px;font:13px/13px 'Liberation Sans', sans-serif;color:#101010;letter-spacing:0.400px;white-space:pre;">1 Table</div><div style="left:770.14px;top:24px;font:13px/13px 'Liberation Sans', sans-serif;color:#101010;letter-spacing:0.300px;white-space:pre;">NL</div><div style="left:827.31px;top:24px;font:13px/13px 'Liberation Sans', sans-serif;color:#101010;letter-spacing:0.450px;white-space:pre;">19434978</div><div style="left:0px;top:57px;width:967px;height:1px;background:#cccccc"></div><div style="left:80px;top:56px;width:1px;height:3px;background:#c4c4c4"></div><div style="left:225px;top:56px;width:1px;height:3px;background:#c4c4c4"></div><div style="left:300px;top:56px;width:1px;height:3px;background:#c4c4c4"></div><div style="left:365px;top:56px;width:1px;height:3px;background:#c4c4c4"></div><div style="left:450px;top:56px;width:1px;height:3px;background:#c4c4c4"></div><div style="left:515px;top:56px;width:1px;height:3px;background:#c4c4c4"></div><div style="left:600px;top:56px;width:1px;height:3px;background:#c4c4c4"></div><div style="left:685px;top:56px;width:1px;height:3px;background:#c4c4c4"></div><div style="left:750px;top:56px;width:1px;height:3px;background:#c4c4c4"></div><div style="left:805px;top:56px;width:1px;height:3px;background:#c4c4c4"></div><div style="left:29.00px;top:42px;font:13px/13px 'Liberation Sans', sans-serif;color:#101010;letter-spacing:0.300px;white-space:pre;">3</div><div style="left:85.00px;top:42px;font:13px/13px 'Liberation Sans', sans-serif;color:#101010;letter-spacing:0.740px;white-space:pre;">01/22/06 00:43 AM</div><div style="left:264.75px;top:42px;font:13px/13px 'Liberation Sans', sans-serif;color:#101010;letter-spacing:0.300px;white-space:pre;">22.00</div><div style="left:327.87px;top:42px;font:13px/13px 'Liberation Sans', sans-serif;color:#101010;letter-spacing:0.400px;white-space:pre;">6 / 10</div><div style="left:422.09px;top:42px;font:13px/13px 'Liberation Sans', sans-serif;color:#101010;letter-spacing:0.300px;white-space:pre;">0.00</div><div style="left:487.09px;top:42px;font:13px/13px 'Liberation Sans', sans-serif;color:#101010;letter-spacing:0.300px;white-space:pre;">33.5</div><div style="left:589.97px;top:42px;font:13px/13px 'Liberation Sans', sans-serif;color:#101010;letter-spacing:0.000px;white-space:pre;">4</div><div style="left:627.46px;top:42px;font:13px/13px 'Liberation Sans', sans-serif;color:#101010;letter-spacing:0.400px;white-space:pre;">Turbo</div><div style="left:697.56px;top:42px;font:13px/13px 'Liberation Sans', sans-serif;color:#101010;letter-spacing:0.400px;white-space:pre;">1 Table</div><div style="left:770.14px;top:42px;font:13px/13px 'Liberation Sans', sans-serif;color:#101010;letter-spacing:0.300px;white-space:pre;">NL</div><div style="left:828.27px;top:42px;font:13px/13px 'Liberation Sans', sans-serif;color:#101010;letter-spacing:0.450px;white-space:pre;">19435011</div><div style="left:28px;top:59px;width:862px;height:15px;background:#90ee90"></div><div style="left:0px;top:75px;width:967px;height:1px;background:#cccccc"></div><div style="left:80px;top:74px;width:1px;height:3px;background:#c4c4c4"></div><div style="left:225px;top:74px;width:1px;height:3px;background:#c4c4c4"></div><div style="left:300px;top:74px;width:1px;height:3px;background:#c4c4c4"></div><div style="left:365px;top:74px;width:1px;height:3px;background:#c4c4c4"></div><div style="left:450px;top:74px;width:1px;height:3px;background:#c4c4c4"></div><div style="left:515px;top:74px;width:1px;height:3px;background:#c4c4c4"></div><div style="left:600px;top:74px;width:1px;height:3px;background:#c4c4c4"></div><div style="left:685px;top:74px;width:1px;height:3px;background:#c4c4c4"></div><div style="left:750px;top:74px;width:1px;height:3px;background:#c4c4c4"></div><div style="left:805px;top:74px;width:1px;height:3px;background:#c4c4c4"></div><div style="left:29.00px;top:60px;font:13px/13px 'Liberation Sans', sans-serif;color:#101010;letter-spacing:0.300px;white-space:pre;">4</div><div style="left:85.00px;top:60px;font:13px/13px 'Liberation Sans', sans-serif;color:#101010;letter-spacing:0.740px;white-space:pre;">01/22/06 00:44 AM</div><div style="left:264.75px;top:60px;font:13px/13px 'Liberation Sans', sans-serif;color:#101010;letter-spacing:0.300px;white-space:pre;">22.00</div><div style="left:327.87px;top:60px;font:13px/13px 'Liberation Sans', sans-serif;color:#101010;letter-spacing:0.400px;white-space:pre;">1 / 10</div><div style="left:407.03px;top:60px;font:13px/13px 'Liberation Sans', sans-serif;color:#101010;letter-spacing:0.300px;white-space:pre;">100.00</div><div style="left:487.09px;top:60px;font:13px/13px 'Liberation Sans', sans-serif;color:#101010;letter-spacing:0.300px;white-space:pre;">44.3</div><div style="left:589.97px;top:60px;font:13px/13px 'Liberation Sans', sans-serif;color:#101010;letter-spacing:0.000px;white-space:pre;">4</div><div style="left:627.46px;top:60px;font:13px/13px 'Liberation Sans', sans-serif;color:#101010;letter-spacing:0.400px;white-space:pre;">Turbo</div><div style="left:697.56px;top:60px;font:13px/13px 'Liberation Sans', sans-serif;color:#101010;letter-spacing:0.400px;white-space:pre;">1 Table</div><div style="left:770.14px;top:60px;font:13px/13px 'Liberation Sans', sans-serif;color:#101010;letter-spacing:0.300px;white-space:pre;">NL</div><div style="left:827.31px;top:60px;font:13px/13px 'Liberation Sans', sans-serif;color:#101010;letter-spacing:0.450px;white-space:pre;">19435017</div><div style="left:28px;top:77px;width:862px;height:15px;background:#90ee90"></div><div style="left:0px;top:93px;width:967px;height:1px;background:#cccccc"></div><div style="left:80px;top:92px;width:1px;height:3px;background:#c4c4c4"></div><div style="left:225px;top:92px;width:1px;height:3px;background:#c4c4c4"></div><div style="left:300px;top:92px;width:1px;height:3px;background:#c4c4c4"></div><div style="left:365px;top:92px;width:1px;height:3px;background:#c4c4c4"></div><div style="left:450px;top:92px;width:1px;height:3px;background:#c4c4c4"></div><div style="left:515px;top:92px;width:1px;height:3px;background:#c4c4c4"></div><div style="left:600px;top:92px;width:1px;height:3px;background:#c4c4c4"></div><div style="left:685px;top:92px;width:1px;height:3px;background:#c4c4c4"></div><div style="left:750px;top:92px;width:1px;height:3px;background:#c4c4c4"></div><div style="left:805px;top:92px;width:1px;height:3px;background:#c4c4c4"></div><div style="left:29.00px;top:78px;font:13px/13px 'Liberation Sans', sans-serif;color:#101010;letter-spacing:0.300px;white-space:pre;">5</div><div style="left:85.00px;top:78px;font:13px/13px 'Liberation Sans', sans-serif;color:#101010;letter-spacing:0.740px;white-space:pre;">01/22/06 01:29 AM</div><div style="left:264.75px;top:78px;font:13px/13px 'Liberation Sans', sans-serif;color:#101010;letter-spacing:0.300px;white-space:pre;">22.00</div><div style="left:327.87px;top:78px;font:13px/13px 'Liberation Sans', sans-serif;color:#101010;letter-spacing:0.400px;white-space:pre;">1 / 10</div><div style="left:407.03px;top:78px;font:13px/13px 'Liberation Sans', sans-serif;color:#101010;letter-spacing:0.300px;white-space:pre;">100.00</div><div style="left:487.09px;top:78px;font:13px/13px 'Liberation Sans', sans-serif;color:#101010;letter-spacing:0.300px;white-space:pre;">35.8</div><div style="left:589.97px;top:78px;font:13px/13px 'Liberation Sans', sans-serif;color:#101010;letter-spacing:0.000px;white-space:pre;">4</div><div style="left:627.46px;top:78px;font:13px/13px 'Liberation Sans', sans-serif;color:#101010;letter-spacing:0.400px;white-space:pre;">Turbo</div><div style="left:697.56px;top:78px;font:13px/13px 'Liberation Sans', sans-serif;color:#101010;letter-spacing:0.400px;white-space:pre;">1 Table</div><div style="left:770.14px;top:78px;font:13px/13px 'Liberation Sans', sans-serif;color:#101010;letter-spacing:0.300px;white-space:pre;">NL</div><div style="left:827.31px;top:78px;font:13px/13px 'Liberation Sans', sans-serif;color:#101010;letter-spacing:0.450px;white-space:pre;">19436410</div><div style="left:0px;top:111px;width:967px;height:1px;background:#cccccc"></div><div style="left:80px;top:110px;width:1px;height:3px;background:#c4c4c4"></div><div style="left:225px;top:110px;width:1px;height:3px;background:#c4c4c4"></div><div style="left:300px;top:110px;width:1px;height:3px;background:#c4c4c4"></div><div style="left:365px;top:110px;width:1px;height:3px;background:#c4c4c4"></div><div style="left:450px;top:110px;width:1px;height:3px;background:#c4c4c4"></div><div style="left:515px;top:110px;width:1px;height:3px;background:#c4c4c4"></div><div style="left:600px;top:110px;width:1px;height:3px;background:#c4c4c4"></div><div style="left:685px;top:110px;width:1px;height:3px;background:#c4c4c4"></div><div style="left:750px;top:110px;width:1px;height:3px;background:#c4c4c4"></div><div style="left:805px;top:110px;width:1px;height:3px;background:#c4c4c4"></div><div style="left:29.00px;top:96px;font:13px/13px 'Liberation Sans', sans-serif;color:#101010;letter-spacing:0.300px;white-space:pre;">6</div><div style="left:85.00px;top:96px;font:13px/13px 'Liberation Sans', sans-serif;color:#101010;letter-spacing:0.740px;white-space:pre;">01/22/06 01:30 AM</div><div style="left:264.75px;top:96px;font:13px/13px 'Liberation Sans', sans-serif;color:#101010;letter-spacing:0.300px;white-space:pre;">22.00</div><div style="left:327.87px;top:96px;font:13px/13px 'Liberation Sans', sans-serif;color:#101010;letter-spacing:0.400px;white-space:pre;">6 / 10</div><div style="left:422.09px;top:96px;font:13px/13px 'Liberation Sans', sans-serif;color:#101010;letter-spacing:0.300px;white-space:pre;">0.00</div><div style="left:487.09px;top:96px;font:13px/13px 'Liberation Sans', sans-serif;color:#101010;letter-spacing:0.300px;white-space:pre;">33.4</div><div style="left:589.97px;top:96px;font:13px/13px 'Liberation Sans', sans-serif;color:#101010;letter-spacing:0.000px;white-space:pre;">4</div><div style="left:627.46px;top:96px;font:13px/13px 'Liberation Sans', sans-serif;color:#101010;letter-spacing:0.400px;white-space:pre;">Turbo</div><div style="left:697.56px;top:96px;font:13px/13px 'Liberation Sans', sans-serif;color:#101010;letter-spacing:0.400px;white-space:pre;">1 Table</div><div style="left:770.14px;top:96px;font:13px/13px 'Liberation Sans', sans-serif;color:#101010;letter-spacing:0.300px;white-space:pre;">NL</div><div style="left:827.31px;top:96px;font:13px/13px 'Liberation Sans', sans-serif;color:#101010;letter-spacing:0.450px;white-space:pre;">19436416</div><div style="left:28px;top:113px;width:862px;height:15px;background:#90ee90"></div><div style="left:0px;top:129px;width:967px;height:1px;background:#cccccc"></div><div style="left:80px;top:128px;width:1px;height:3px;background:#c4c4c4"></div><div style="left:225px;top:128px;width:1px;height:3px;background:#c4c4c4"></div><div style="left:300px;top:128px;width:1px;height:3px;background:#c4c4c4"></div><div style="left:365px;top:128px;width:1px;height:3px;background:#c4c4c4"></div><div style="left:450px;top:128px;width:1px;height:3px;background:#c4c4c4"></div><div style="left:515px;top:128px;width:1px;height:3px;background:#c4c4c4"></div><div style="left:600px;top:128px;width:1px;height:3px;background:#c4c4c4"></div><div style="left:685px;top:128px;width:1px;height:3px;background:#c4c4c4"></div><div style="left:750px;top:128px;width:1px;height:3px;background:#c4c4c4"></div><div style="left:805px;top:128px;width:1px;height:3px;background:#c4c4c4"></div><div style="left:29.00px;top:114px;font:13px/13px 'Liberation Sans', sans-serif;color:#101010;letter-spacing:0.300px;white-space:pre;">7</div><div style="left:85.00px;top:114px;font:13px/13px 'Liberation Sans', sans-serif;color:#101010;letter-spacing:0.740px;white-space:pre;">01/22/06 01:30 AM</div><div style="left:264.75px;top:114px;font:13px/13px 'Liberation Sans', sans-serif;color:#101010;letter-spacing:0.300px;white-space:pre;">22.00</div><div style="left:327.87px;top:114px;font:13px/13px 'Liberation Sans', sans-serif;color:#101010;letter-spacing:0.400px;white-space:pre;">2 / 10</div><div style="left:414.55px;top:114px;font:13px/13px 'Liberation Sans', sans-serif;color:#101010;letter-spacing:0.300px;white-space:pre;">60.00</div><div style="left:487.09px;top:114px;font:13px/13px 'Liberation Sans', sans-serif;color:#101010;letter-spacing:0.300px;white-space:pre;">38.5</div><div style="left:589.97px;top:114px;font:13px/13px 'Liberation Sans', sans-serif;color:#101010;letter-spacing:0.000px;white-space:pre;">4</div><div style="left:627.46px;top:114px;font:13px/13px 'Liberation Sans', sans-serif;color:#101010;letter-spacing:0.400px;white-space:pre;">Turbo</div><div style="left:697.56px;top:114px;font:13px/13px 'Liberation Sans', sans-serif;color:#101010;letter-spacing:0.400px;white-space:pre;">1 Table</div><div style="left:770.14px;top:114px;font:13px/13px 'Liberation Sans', sans-serif;color:#101010;letter-spacing:0.300px;white-space:pre;">NL</div><div style="left:827.31px;top:114px;font:13px/13px 'Liberation Sans', sans-serif;color:#101010;letter-spacing:0.450px;white-space:pre;">19436423</div><div style="left:0px;top:147px;width:967px;height:1px;background:#cccccc"></div><div style="left:80px;top:146px;width:1px;height:3px;background:#c4c4c4"></div><div style="left:225px;top:146px;width:1px;height:3px;background:#c4c4c4"></div><div style="left:300px;top:146px;width:1px;height:3px;background:#c4c4c4"></div><div style="left:365px;top:146px;width:1px;height:3px;background:#c4c4c4"></div><div style="left:450px;top:146px;width:1px;height:3px;background:#c4c4c4"></div><div style="left:515px;top:146px;width:1px;height:3px;background:#c4c4c4"></div><div style="left:600px;top:146px;width:1px;height:3px;background:#c4c4c4"></div><div style="left:685px;top:146px;width:1px;height:3px;background:#c4c4c4"></div><div style="left:750px;top:146px;width:1px;height:3px;background:#c4c4c4"></div><div style="left:805px;top:146px;width:1px;height:3px;background:#c4c4c4"></div><div style="left:29.00px;top:132px;font:13px/13px 'Liberation Sans', sans-serif;color:#101010;letter-spacing:0.300px;white-space:pre;">8</div><div style="left:85.00px;top:132px;font:13px/13px 'Liberation Sans', sans-serif;color:#101010;letter-spacing:0.740px;white-space:pre;">01/22/06 01:30 AM</div><div style="left:264.75px;top:132px;font:13px/13px 'Liberation Sans', sans-serif;color:#101010;letter-spacing:0.300px;white-space:pre;">22.00</div><div style="left:320.23px;top:132px;font:13px/13px 'Liberation Sans', sans-serif;color:#101010;letter-spacing:0.400px;white-space:pre;">10 / 10</div><div style="left:422.09px;top:132px;font:13px/13px 'Liberation Sans', sans-serif;color:#101010;letter-spacing:0.300px;white-space:pre;">0.00</div><div style="left:494.62px;top:132px;font:13px/13px 'Liberation Sans', sans-serif;color:#101010;letter-spacing:0.300px;white-space:pre;">8.2</div><div style="left:589.97px;top:132px;font:13px/13px 'Liberation Sans', sans-serif;color:#101010;letter-spacing:0.000px;white-space:pre;">4</div><div style="left:627.46px;top:132px;font:13px/13px 'Liberation Sans', sans-serif;color:#101010;letter-spacing:0.400px;white-space:pre;">Turbo</div><div style="left:697.56px;top:132px;font:13px/13px 'Liberation Sans', sans-serif;color:#101010;letter-spacing:0.400px;white-space:pre;">1 Table</div><div style="left:770.14px;top:132px;font:13px/13px 'Liberation Sans', sans-serif;color:#101010;letter-spacing:0.300px;white-space:pre;">NL</div><div style="left:827.31px;top:132px;font:13px/13px 'Liberation Sans', sans-serif;color:#101010;letter-spacing:0.450px;white-space:pre;">19436424</div><div style="left:28px;top:149px;width:862px;height:15px;background:#90ee90"></div><div style="left:0px;top:165px;width:967px;height:1px;background:#cccccc"></div><div style="left:80px;top:164px;width:1px;height:3px;background:#c4c4c4"></div><div style="left:225px;top:164px;width:1px;height:3px;background:#c4c4c4"></div><div style="left:300px;top:164px;width:1px;height:3px;background:#c4c4c4"></div><div style="left:365px;top:164px;width:1px;height:3px;background:#c4c4c4"></div><div style="left:450px;top:164px;width:1px;height:3px;background:#c4c4c4"></div><div style="left:515px;top:164px;width:1px;height:3px;background:#c4c4c4"></div><div style="left:600px;top:164px;width:1px;height:3px;background:#c4c4c4"></div><div style="left:685px;top:164px;width:1px;height:3px;background:#c4c4c4"></div><div style="left:750px;top:164px;width:1px;height:3px;background:#c4c4c4"></div><div style="left:805px;top:164px;width:1px;height:3px;background:#c4c4c4"></div><div style="left:29.00px;top:150px;font:13px/13px 'Liberation Sans', sans-serif;color:#101010;letter-spacing:0.300px;white-space:pre;">9</div><div style="left:85.00px;top:150px;font:13px/13px 'Liberation Sans', sans-serif;color:#101010;letter-spacing:0.740px;white-space:pre;">01/22/06 01:40 AM</div><div style="left:264.75px;top:150px;font:13px/13px 'Liberation Sans', sans-serif;color:#101010;letter-spacing:0.300px;white-space:pre;">22.00</div><div style="left:327.87px;top:150px;font:13px/13px 'Liberation Sans', sans-serif;color:#101010;letter-spacing:0.400px;white-space:pre;">2 / 10</div><div style="left:414.55px;top:150px;font:13px/13px 'Liberation Sans', sans-serif;color:#101010;letter-spacing:0.300px;white-space:pre;">60.00</div><div style="left:487.09px;top:150px;font:13px/13px 'Liberation Sans', sans-serif;color:#101010;letter-spacing:0.300px;white-space:pre;">25.6</div><div style="left:589.97px;top:150px;font:13px/13px 'Liberation Sans', sans-serif;color:#101010;letter-spacing:0.000px;white-space:pre;">4</div><div style="left:627.46px;top:150px;font:13px/13px 'Liberation Sans', sans-serif;color:#101010;letter-spacing:0.400px;white-space:pre;">Turbo</div><div style="left:697.56px;top:150px;font:13px/13px 'Liberation Sans', sans-serif;color:#101010;letter-spacing:0.400px;white-space:pre;">1 Table</div><div style="left:770.14px;top:150px;font:13px/13px 'Liberation Sans', sans-serif;color:#101010;letter-spacing:0.300px;white-space:pre;">NL</div><div style="left:827.31px;top:150px;font:13px/13px 'Liberation Sans', sans-serif;color:#101010;letter-spacing:0.450px;white-space:pre;">19436678</div><div style="left:28px;top:167px;width:862px;height:15px;background:#90ee90"></div><div style="left:0px;top:183px;width:967px;height:1px;background:#cccccc"></div><div style="left:80px;top:182px;width:1px;height:3px;background:#c4c4c4"></div><div style="left:225px;top:182px;width:1px;height:3px;background:#c4c4c4"></div><div style="left:300px;top:182px;width:1px;height:3px;background:#c4c4c4"></div><div style="left:365px;top:182px;width:1px;height:3px;background:#c4c4c4"></div><div style="left:450px;top:182px;width:1px;height:3px;background:#c4c4c4"></div><div style="left:515px;top:182px;width:1px;height:3px;background:#c4c4c4"></div><div style="left:600px;top:182px;width:1px;height:3px;background:#c4c4c4"></div><div style="left:685px;top:182px;width:1px;height:3px;background:#c4c4c4"></div><div style="left:750px;top:182px;width:1px;height:3px;background:#c4c4c4"></div><div style="left:805px;top:182px;width:1px;height:3px;background:#c4c4c4"></div><div style="left:29.00px;top:168px;font:13px/13px 'Liberation Sans', sans-serif;color:#101010;letter-spacing:0.300px;white-space:pre;">10</div><div style="left:85.00px;top:168px;font:13px/13px 'Liberation Sans', sans-serif;color:#101010;letter-spacing:0.740px;white-space:pre;">01/22/06 02:20 AM</div><div style="left:264.75px;top:168px;font:13px/13px 'Liberation Sans', sans-serif;color:#101010;letter-spacing:0.300px;white-space:pre;">22.00</div><div style="left:327.87px;top:168px;font:13px/13px 'Liberation Sans', sans-serif;color:#101010;letter-spacing:0.400px;white-space:pre;">1 / 10</div><div style="left:407.03px;top:168px;font:13px/13px 'Liberation Sans', sans-serif;color:#101010;letter-spacing:0.300px;white-space:pre;">100.00</div><div style="left:487.09px;top:168px;font:13px/13px 'Liberation Sans', sans-serif;color:#101010;letter-spacing:0.300px;white-space:pre;">49.9</div><div style="left:589.97px;top:168px;font:13px/13px 'Liberation Sans', sans-serif;color:#101010;letter-spacing:0.000px;white-space:pre;">4</div><div style="left:627.46px;top:168px;font:13px/13px 'Liberation Sans', sans-serif;color:#101010;letter-spacing:0.400px;white-space:pre;">Turbo</div><div style="left:697.56px;top:168px;font:13px/13px 'Liberation Sans', sans-serif;color:#101010;letter-spacing:0.400px;white-space:pre;">1 Table</div><div style="left:770.14px;top:168px;font:13px/13px 'Liberation Sans', sans-serif;color:#101010;letter-spacing:0.300px;white-space:pre;">NL</div><div style="left:827.31px;top:168px;font:13px/13px 'Liberation Sans', sans-serif;color:#101010;letter-spacing:0.450px;white-space:pre;">19437628</div><div style="left:0px;top:201px;width:967px;height:1px;background:#cccccc"></div><div style="left:80px;top:200px;width:1px;height:3px;background:#c4c4c4"></div><div style="left:225px;top:200px;width:1px;height:3px;background:#c4c4c4"></div><div style="left:300px;top:200px;width:1px;height:3px;background:#c4c4c4"></div><div style="left:365px;top:200px;width:1px;height:3px;background:#c4c4c4"></div><div style="left:450px;top:200px;width:1px;height:3px;background:#c4c4c4"></div><div style="left:515px;top:200px;width:1px;height:3px;background:#c4c4c4"></div><div style="left:600px;top:200px;width:1px;height:3px;background:#c4c4c4"></div><div style="left:685px;top:200px;width:1px;height:3px;background:#c4c4c4"></div><div style="left:750px;top:200px;width:1px;height:3px;background:#c4c4c4"></div><div style="left:805px;top:200px;width:1px;height:3px;background:#c4c4c4"></div><div style="left:29.00px;top:186px;font:13px/13px 'Liberation Sans', sans-serif;color:#101010;letter-spacing:0.300px;white-space:pre;">11</div><div style="left:85.00px;top:186px;font:13px/13px 'Liberation Sans', sans-serif;color:#101010;letter-spacing:0.740px;white-space:pre;">01/22/06 02:20 AM</div><div style="left:264.75px;top:186px;font:13px/13px 'Liberation Sans', sans-serif;color:#101010;letter-spacing:0.300px;white-space:pre;">22.00</div><div style="left:327.87px;top:186px;font:13px/13px 'Liberation Sans', sans-serif;color:#101010;letter-spacing:0.400px;white-space:pre;">7 / 10</div><div style="left:422.09px;top:186px;font:13px/13px 'Liberation Sans', sans-serif;color:#101010;letter-spacing:0.300px;white-space:pre;">0.00</div><div style="left:487.09px;top:186px;font:13px/13px 'Liberation Sans', sans-serif;color:#101010;letter-spacing:0.300px;white-space:pre;">22.1</div><div style="left:589.97px;top:186px;font:13px/13px 'Liberation Sans', sans-serif;color:#101010;letter-spacing:0.000px;white-space:pre;">4</div><div style="left:627.46px;top:186px;font:13px/13px 'Liberation Sans', sans-serif;color:#101010;letter-spacing:0.400px;white-space:pre;">Turbo</div><div style="left:697.56px;top:186px;font:13px/13px 'Liberation Sans', sans-serif;color:#101010;letter-spacing:0.400px;white-space:pre;">1 Table</div><div style="left:770.14px;top:186px;font:13px/13px 'Liberation Sans', sans-serif;color:#101010;letter-spacing:0.300px;white-space:pre;">NL</div><div style="left:827.31px;top:186px;font:13px/13px 'Liberation Sans', sans-serif;color:#101010;letter-spacing:0.450px;white-space:pre;">19437632</div><div style="left:28px;top:203px;width:862px;height:15px;background:#90ee90"></div><div style="left:0px;top:219px;width:967px;height:1px;background:#cccccc"></div><div style="left:80px;top:218px;width:1px;height:3px;background:#c4c4c4"></div><div style="left:225px;top:218px;width:1px;height:3px;background:#c4c4c4"></div><div style="left:300px;top:218px;width:1px;height:3px;background:#c4c4c4"></div><div style="left:365px;top:218px;width:1px;height:3px;background:#c4c4c4"></div><div style="left:450px;top:218px;width:1px;height:3px;background:#c4c4c4"></div><div style="left:515px;top:218px;width:1px;height:3px;background:#c4c4c4"></div><div style="left:600px;top:218px;width:1px;height:3px;background:#c4c4c4"></div><div style="left:685px;top:218px;width:1px;height:3px;background:#c4c4c4"></div><div style="left:750px;top:218px;width:1px;height:3px;background:#c4c4c4"></div><div style="left:805px;top:218px;width:1px;height:3px;background:#c4c4c4"></div><div style="left:29.00px;top:204px;font:13px/13px 'Liberation Sans', sans-serif;color:#101010;letter-spacing:0.300px;white-space:pre;">12</div><div style="left:85.00px;top:204px;font:13px/13px 'Liberation Sans', sans-serif;color:#101010;letter-spacing:0.740px;white-space:pre;">01/22/06 02:20 AM</div><div style="left:264.75px;top:204px;font:13px/13px 'Liberation Sans', sans-serif;color:#101010;letter-spacing:0.300px;white-space:pre;">22.00</div><div style="left:327.87px;top:204px;font:13px/13px 'Liberation Sans', sans-serif;color:#101010;letter-spacing:0.400px;white-space:pre;">1 / 10</div><div style="left:407.03px;top:204px;font:13px/13px 'Liberation Sans', sans-serif;color:#101010;letter-spacing:0.300px;white-space:pre;">100.00</div><div style="left:487.09px;top:204px;font:13px/13px 'Liberation Sans', sans-serif;color:#101010;letter-spacing:0.300px;white-space:pre;">34.1</div><div style="left:589.97px;top:204px;font:13px/13px 'Liberation Sans', sans-serif;color:#101010;letter-spacing:0.000px;white-space:pre;">4</div><div style="left:627.46px;top:204px;font:13px/13px 'Liberation Sans', sans-serif;color:#101010;letter-spacing:0.400px;white-space:pre;">Turbo</div><div style="left:697.56px;top:204px;font:13px/13px 'Liberation Sans', sans-serif;color:#101010;letter-spacing:0.400px;white-space:pre;">1 Table</div><div style="left:770.14px;top:204px;font:13px/13px 'Liberation Sans', sans-serif;color:#101010;letter-spacing:0.300px;white-space:pre;">NL</div><div style="left:827.31px;top:204px;font:13px/13px 'Liberation Sans', sans-serif;color:#101010;letter-spacing:0.450px;white-space:pre;">19437635</div><div style="left:0px;top:237px;width:967px;height:1px;background:#cccccc"></div><div style="left:80px;top:236px;width:1px;height:3px;background:#c4c4c4"></div><div style="left:225px;top:236px;width:1px;height:3px;background:#c4c4c4"></div><div style="left:300px;top:236px;width:1px;height:3px;background:#c4c4c4"></div><div style="left:365px;top:236px;width:1px;height:3px;background:#c4c4c4"></div><div style="left:450px;top:236px;width:1px;height:3px;background:#c4c4c4"></div><div style="left:515px;top:236px;width:1px;height:3px;background:#c4c4c4"></div><div style="left:600px;top:236px;width:1px;height:3px;background:#c4c4c4"></div><div style="left:685px;top:236px;width:1px;height:3px;background:#c4c4c4"></div><div style="left:750px;top:236px;width:1px;height:3px;background:#c4c4c4"></div><div style="left:805px;top:236px;width:1px;height:3px;background:#c4c4c4"></div><div style="left:29.00px;top:222px;font:13px/13px 'Liberation Sans', sans-serif;color:#101010;letter-spacing:0.300px;white-space:pre;">13</div><div style="left:85.00px;top:222px;font:13px/13px 'Liberation Sans', sans-serif;color:#101010;letter-spacing:0.740px;white-space:pre;">01/22/06 02:21 AM</div><div style="left:264.75px;top:222px;font:13px/13px 'Liberation Sans', sans-serif;color:#101010;letter-spacing:0.300px;white-space:pre;">22.00</div><div style="left:327.87px;top:222px;font:13px/13px 'Liberation Sans', sans-serif;color:#101010;letter-spacing:0.400px;white-space:pre;">7 / 10</div><div style="left:422.09px;top:222px;font:13px/13px 'Liberation Sans', sans-serif;color:#101010;letter-spacing:0.300px;white-space:pre;">0.00</div><div style="left:494.62px;top:222px;font:13px/13px 'Liberation Sans', sans-serif;color:#101010;letter-spacing:0.300px;white-space:pre;">9.9</div><div style="left:589.97px;top:222px;font:13px/13px 'Liberation Sans', sans-serif;color:#101010;letter-spacing:0.000px;white-space:pre;">4</div><div style="left:627.46px;top:222px;font:13px/13px 'Liberation Sans', sans-serif;color:#101010;letter-spacing:0.400px;white-space:pre;">Turbo</div><div style="left:697.56px;top:222px;font:13px/13px 'Liberation Sans', sans-serif;color:#101010;letter-spacing:0.400px;white-space:pre;">1 Table</div><div style="left:770.14px;top:222px;font:13px/13px 'Liberation Sans', sans-serif;color:#101010;letter-spacing:0.300px;white-space:pre;">NL</div><div style="left:827.31px;top:222px;font:13px/13px 'Liberation Sans', sans-serif;color:#101010;letter-spacing:0.450px;white-space:pre;">19437660</div><div style="left:28px;top:239px;width:862px;height:15px;background:#90ee90"></div><div style="left:0px;top:255px;width:967px;height:1px;background:#cccccc"></div><div style="left:80px;top:254px;width:1px;height:3px;background:#c4c4c4"></div><div style="left:225px;top:254px;width:1px;height:3px;background:#c4c4c4"></div><div style="left:300px;top:254px;width:1px;height:3px;background:#c4c4c4"></div><div style="left:365px;top:254px;width:1px;height:3px;background:#c4c4c4"></div><div style="left:450px;top:254px;width:1px;height:3px;background:#c4c4c4"></div><div style="left:515px;top:254px;width:1px;height:3px;background:#c4c4c4"></div><div style="left:600px;top:254px;width:1px;height:3px;background:#c4c4c4"></div><div style="left:685px;top:254px;width:1px;height:3px;background:#c4c4c4"></div><div style="left:750px;top:254px;width:1px;height:3px;background:#c4c4c4"></div><div style="left:805px;top:254px;width:1px;height:3px;background:#c4c4c4"></div><div style="left:29.00px;top:240px;font:13px/13px 'Liberation Sans', sans-serif;color:#101010;letter-spacing:0.300px;white-space:pre;">14</div><div style="left:85.00px;top:240px;font:13px/13px 'Liberation Sans', sans-serif;color:#101010;letter-spacing:0.696px;white-space:pre;">01/22/06 13:46 PM</div><div style="left:264.75px;top:240px;font:13px/13px 'Liberation Sans', sans-serif;color:#101010;letter-spacing:0.300px;white-space:pre;">22.00</div><div style="left:327.87px;top:240px;font:13px/13px 'Liberation Sans', sans-serif;color:#101010;letter-spacing:0.400px;white-space:pre;">1 / 10</div><div style="left:407.03px;top:240px;font:13px/13px 'Liberation Sans', sans-serif;color:#101010;letter-spacing:0.300px;white-space:pre;">100.00</div><div style="left:487.09px;top:240px;font:13px/13px 'Liberation Sans', sans-serif;color:#101010;letter-spacing:0.300px;white-space:pre;">39.2</div><div style="left:589.97px;top:240px;font:13px/13px 'Liberation Sans', sans-serif;color:#101010;letter-spacing:0.000px;white-space:pre;">4</div><div style="left:627.46px;top:240px;font:13px/13px 'Liberation Sans', sans-serif;color:#101010;letter-spacing:0.400px;white-space:pre;">Turbo</div><div style="left:697.56px;top:240px;font:13px/13px 'Liberation Sans', sans-serif;color:#101010;letter-spacing:0.400px;white-space:pre;">1 Table</div><div style="left:770.14px;top:240px;font:13px/13px 'Liberation Sans', sans-serif;color:#101010;letter-spacing:0.300px;white-space:pre;">NL</div><div style="left:827.31px;top:240px;font:13px/13px 'Liberation Sans', sans-serif;color:#101010;letter-spacing:0.450px;white-space:pre;">19448479</div><div style="left:0px;top:273px;width:967px;height:1px;background:#cccccc"></div><div style="left:80px;top:272px;width:1px;height:3px;background:#c4c4c4"></div><div style="left:225px;top:272px;width:1px;height:3px;background:#c4c4c4"></div><div style="left:300px;top:272px;width:1px;height:3px;background:#c4c4c4"></div><div style="left:365px;top:272px;width:1px;height:3px;background:#c4c4c4"></div><div style="left:450px;top:272px;width:1px;height:3px;background:#c4c4c4"></div><div style="left:515px;top:272px;width:1px;height:3px;background:#c4c4c4"></div><div style="left:600px;top:272px;width:1px;height:3px;background:#c4c4c4"></div><div style="left:685px;top:272px;width:1px;height:3px;background:#c4c4c4"></div><div style="left:750px;top:272px;width:1px;height:3px;background:#c4c4c4"></div><div style="left:805px;top:272px;width:1px;height:3px;background:#c4c4c4"></div><div style="left:29.00px;top:258px;font:13px/13px 'Liberation Sans', sans-serif;color:#101010;letter-spacing:0.300px;white-space:pre;">15</div><div style="left:85.00px;top:258px;font:13px/13px 'Liberation Sans', sans-serif;color:#101010;letter-spacing:0.696px;white-space:pre;">01/22/06 13:46 PM</div><div style="left:264.75px;top:258px;font:13px/13px 'Liberation Sans', sans-serif;color:#101010;letter-spacing:0.300px;white-space:pre;">22.00</div><div style="left:327.87px;top:258px;font:13px/13px 'Liberation Sans', sans-serif;color:#101010;letter-spacing:0.400px;white-space:pre;">5 / 10</div><div style="left:422.09px;top:258px;font:13px/13px 'Liberation Sans', sans-serif;color:#101010;letter-spacing:0.300px;white-space:pre;">0.00</div><div style="left:487.09px;top:258px;font:13px/13px 'Liberation Sans', sans-serif;color:#101010;letter-spacing:0.300px;white-space:pre;">23.7</div><div style="left:589.97px;top:258px;font:13px/13px 'Liberation Sans', sans-serif;color:#101010;letter-spacing:0.000px;white-space:pre;">4</div><div style="left:627.46px;top:258px;font:13px/13px 'Liberation Sans', sans-serif;color:#101010;letter-spacing:0.400px;white-space:pre;">Turbo</div><div style="left:697.56px;top:258px;font:13px/13px 'Liberation Sans', sans-serif;color:#101010;letter-spacing:0.400px;white-space:pre;">1 Table</div><div style="left:770.14px;top:258px;font:13px/13px 'Liberation Sans', sans-serif;color:#101010;letter-spacing:0.300px;white-space:pre;">NL</div><div style="left:827.31px;top:258px;font:13px/13px 'Liberation Sans', sans-serif;color:#101010;letter-spacing:0.450px;white-space:pre;">19448480</div><div style="left:0px;top:291px;width:967px;height:1px;background:#cccccc"></div><div style="left:80px;top:290px;width:1px;height:3px;background:#c4c4c4"></div><div style="left:225px;top:290px;width:1px;height:3px;background:#c4c4c4"></div><div style="left:300px;top:290px;width:1px;height:3px;background:#c4c4c4"></div><div style="left:365px;top:290px;width:1px;height:3px;background:#c4c4c4"></div><div style="left:450px;top:290px;width:1px;height:3px;background:#c4c4c4"></div><div style="left:515px;top:290px;width:1px;height:3px;background:#c4c4c4"></div><div style="left:600px;top:290px;width:1px;height:3px;background:#c4c4c4"></div><div style="left:685px;top:290px;width:1px;height:3px;background:#c4c4c4"></div><div style="left:750px;top:290px;width:1px;height:3px;background:#c4c4c4"></div><div style="left:805px;top:290px;width:1px;height:3px;background:#c4c4c4"></div><div style="left:29.00px;top:276px;font:13px/13px 'Liberation Sans', sans-serif;color:#101010;letter-spacing:0.300px;white-space:pre;">16</div><div style="left:85.00px;top:276px;font:13px/13px 'Liberation Sans', sans-serif;color:#101010;letter-spacing:0.696px;white-space:pre;">01/22/06 13:46 PM</div><div style="left:264.75px;top:276px;font:13px/13px 'Liberation Sans', sans-serif;color:#101010;letter-spacing:0.300px;white-space:pre;">22.00</div><div style="left:327.87px;top:276px;font:13px/13px 'Liberation Sans', sans-serif;color:#101010;letter-spacing:0.400px;white-space:pre;">7 / 10</div><div style="left:422.09px;top:276px;font:13px/13px 'Liberation Sans', sans-serif;color:#101010;letter-spacing:0.300px;white-space:pre;">0.00</div><div style="left:487.09px;top:276px;font:13px/13px 'Liberation Sans', sans-serif;color:#101010;letter-spacing:0.300px;white-space:pre;">15.7</div><div style="left:589.97px;top:276px;font:13px/13px 'Liberation Sans', sans-serif;color:#101010;letter-spacing:0.000px;white-space:pre;">4</div><div style="left:627.46px;top:276px;font:13px/13px 'Liberation Sans', sans-serif;color:#101010;letter-spacing:0.400px;white-space:pre;">Turbo</div><div style="left:697.56px;top:276px;font:13px/13px 'Liberation Sans', sans-serif;color:#101010;letter-spacing:0.400px;white-space:pre;">1 Table</div><div style="left:770.14px;top:276px;font:13px/13px 'Liberation Sans', sans-serif;color:#101010;letter-spacing:0.300px;white-space:pre;">NL</div><div style="left:827.31px;top:276px;font:13px/13px 'Liberation Sans', sans-serif;color:#101010;letter-spacing:0.450px;white-space:pre;">19448481</div><div style="left:28px;top:293px;width:862px;height:15px;background:#90ee90"></div><div style="left:0px;top:309px;width:967px;height:1px;background:#cccccc"></div><div style="left:80px;top:308px;width:1px;height:3px;background:#c4c4c4"></div><div style="left:225px;top:308px;width:1px;height:3px;background:#c4c4c4"></div><div style="left:300px;top:308px;width:1px;height:3px;background:#c4c4c4"></div><div style="left:365px;top:308px;width:1px;height:3px;background:#c4c4c4"></div><div style="left:450px;top:308px;width:1px;height:3px;background:#c4c4c4"></div><div style="left:515px;top:308px;width:1px;height:3px;background:#c4c4c4"></div><div style="left:600px;top:308px;width:1px;height:3px;background:#c4c4c4"></div><div style="left:685px;top:308px;width:1px;height:3px;background:#c4c4c4"></div><div style="left:750px;top:308px;width:1px;height:3px;background:#c4c4c4"></div><div style="left:805px;top:308px;width:1px;height:3px;background:#c4c4c4"></div><div style="left:29.00px;top:294px;font:13px/13px 'Liberation Sans', sans-serif;color:#101010;letter-spacing:0.300px;white-space:pre;">17</div><div style="left:85.00px;top:294px;font:13px/13px 'Liberation Sans', sans-serif;color:#101010;letter-spacing:0.696px;white-space:pre;">01/22/06 13:48 PM</div><div style="left:264.75px;top:294px;font:13px/13px 'Liberation Sans', sans-serif;color:#101010;letter-spacing:0.300px;white-space:pre;">22.00</div><div style="left:327.87px;top:294px;font:13px/13px 'Liberation Sans', sans-serif;color:#101010;letter-spacing:0.400px;white-space:pre;">2 / 10</div><div style="left:414.55px;top:294px;font:13px/13px 'Liberation Sans', sans-serif;color:#101010;letter-spacing:0.300px;white-space:pre;">60.00</div><div style="left:487.09px;top:294px;font:13px/13px 'Liberation Sans', sans-serif;color:#101010;letter-spacing:0.300px;white-space:pre;">39.0</div><div style="left:589.97px;top:294px;font:13px/13px 'Liberation Sans', sans-serif;color:#101010;letter-spacing:0.000px;white-space:pre;">4</div><div style="left:627.46px;top:294px;font:13px/13px 'Liberation Sans', sans-serif;color:#101010;letter-spacing:0.400px;white-space:pre;">Turbo</div><div style="left:697.56px;top:294px;font:13px/13px 'Liberation Sans', sans-serif;color:#101010;letter-spacing:0.400px;white-space:pre;">1 Table</div><div style="left:770.14px;top:294px;font:13px/13px 'Liberation Sans', sans-serif;color:#101010;letter-spacing:0.300px;white-space:pre;">NL</div><div style="left:827.31px;top:294px;font:13px/13px 'Liberation Sans', sans-serif;color:#101010;letter-spacing:0.450px;white-space:pre;">19448524</div><div style="left:28px;top:311px;width:862px;height:15px;background:#90ee90"></div><div style="left:0px;top:327px;width:967px;height:1px;background:#cccccc"></div><div style="left:80px;top:326px;width:1px;height:3px;background:#c4c4c4"></div><div style="left:225px;top:326px;width:1px;height:3px;background:#c4c4c4"></div><div style="left:300px;top:326px;width:1px;height:3px;background:#c4c4c4"></div><div style="left:365px;top:326px;width:1px;height:3px;background:#c4c4c4"></div><div style="left:450px;top:326px;width:1px;height:3px;background:#c4c4c4"></div><div style="left:515px;top:326px;width:1px;height:3px;background:#c4c4c4"></div><div style="left:600px;top:326px;width:1px;height:3px;background:#c4c4c4"></div><div style="left:685px;top:326px;width:1px;height:3px;background:#c4c4c4"></div><div style="left:750px;top:326px;width:1px;height:3px;background:#c4c4c4"></div><div style="left:805px;top:326px;width:1px;height:3px;background:#c4c4c4"></div><div style="left:29.00px;top:312px;font:13px/13px 'Liberation Sans', sans-serif;color:#101010;letter-spacing:0.300px;white-space:pre;">18</div><div style="left:85.00px;top:312px;font:13px/13px 'Liberation Sans', sans-serif;color:#101010;letter-spacing:0.740px;white-space:pre;">01/24/06 01:22 AM</div><div style="left:264.75px;top:312px;font:13px/13px 'Liberation Sans', sans-serif;color:#101010;letter-spacing:0.300px;white-space:pre;">22.00</div><div style="left:327.87px;top:312px;font:13px/13px 'Liberation Sans', sans-serif;color:#101010;letter-spacing:0.400px;white-space:pre;">3 / 10</div><div style="left:414.55px;top:312px;font:13px/13px 'Liberation Sans', sans-serif;color:#101010;letter-spacing:0.300px;white-space:pre;">40.00</div><div style="left:487.09px;top:312px;font:13px/13px 'Liberation Sans', sans-serif;color:#101010;letter-spacing:0.300px;white-space:pre;">34.8</div><div style="left:589.97px;top:312px;font:13px/13px 'Liberation Sans', sans-serif;color:#101010;letter-spacing:0.000px;white-space:pre;">4</div><div style="left:627.46px;top:312px;font:13px/13px 'Liberation Sans', sans-serif;color:#101010;letter-spacing:0.400px;white-space:pre;">Turbo</div><div style="left:697.56px;top:312px;font:13px/13px 'Liberation Sans', sans-serif;color:#101010;letter-spacing:0.400px;white-space:pre;">1 Table</div><div style="left:770.14px;top:312px;font:13px/13px 'Liberation Sans', sans-serif;color:#101010;letter-spacing:0.300px;white-space:pre;">NL</div><div style="left:827.31px;top:312px;font:13px/13px 'Liberation Sans', sans-serif;color:#101010;letter-spacing:0.450px;white-space:pre;">19501456</div><div style="left:0px;top:345px;width:967px;height:1px;background:#cccccc"></div><div style="left:80px;top:344px;width:1px;height:3px;background:#c4c4c4"></div><div style="left:225px;top:344px;width:1px;height:3px;background:#c4c4c4"></div><div style="left:300px;top:344px;width:1px;height:3px;background:#c4c4c4"></div><div style="left:365px;top:344px;width:1px;height:3px;background:#c4c4c4"></div><div style="left:450px;top:344px;width:1px;height:3px;background:#c4c4c4"></div><div style="left:515px;top:344px;width:1px;height:3px;background:#c4c4c4"></div><div style="left:600px;top:344px;width:1px;height:3px;background:#c4c4c4"></div><div style="left:685px;top:344px;width:1px;height:3px;background:#c4c4c4"></div><div style="left:750px;top:344px;width:1px;height:3px;background:#c4c4c4"></div><div style="left:805px;top:344px;width:1px;height:3px;background:#c4c4c4"></div><div style="left:29.00px;top:330px;font:13px/13px 'Liberation Sans', sans-serif;color:#101010;letter-spacing:0.300px;white-space:pre;">19</div><div style="left:85.00px;top:330px;font:13px/13px 'Liberation Sans', sans-serif;color:#101010;letter-spacing:0.740px;white-space:pre;">01/24/06 01:22 AM</div><div style="left:264.75px;top:330px;font:13px/13px 'Liberation Sans', sans-serif;color:#101010;letter-spacing:0.300px;white-space:pre;">22.00</div><div style="left:327.87px;top:330px;font:13px/13px 'Liberation Sans', sans-serif;color:#101010;letter-spacing:0.400px;white-space:pre;">8 / 10</div><div style="left:422.09px;top:330px;font:13px/13px 'Liberation Sans', sans-serif;color:#101010;letter-spacing:0.300px;white-space:pre;">0.00</div><div style="left:487.09px;top:330px;font:13px/13px 'Liberation Sans', sans-serif;color:#101010;letter-spacing:0.300px;white-space:pre;">29.7</div><div style="left:589.97px;top:330px;font:13px/13px 'Liberation Sans', sans-serif;color:#101010;letter-spacing:0.000px;white-space:pre;">4</div><div style="left:627.46px;top:330px;font:13px/13px 'Liberation Sans', sans-serif;color:#101010;letter-spacing:0.400px;white-space:pre;">Turbo</div><div style="left:697.56px;top:330px;font:13px/13px 'Liberation Sans', sans-serif;color:#101010;letter-spacing:0.400px;white-space:pre;">1 Table</div><div style="left:770.14px;top:330px;font:13px/13px 'Liberation Sans', sans-serif;color:#101010;letter-spacing:0.300px;white-space:pre;">NL</div><div style="left:827.31px;top:330px;font:13px/13px 'Liberation Sans', sans-serif;color:#101010;letter-spacing:0.450px;white-space:pre;">19501459</div><div style="left:28px;top:347px;width:862px;height:15px;background:#90ee90"></div><div style="left:0px;top:363px;width:967px;height:1px;background:#cccccc"></div><div style="left:80px;top:362px;width:1px;height:3px;background:#c4c4c4"></div><div style="left:225px;top:362px;width:1px;height:3px;background:#c4c4c4"></div><div style="left:300px;top:362px;width:1px;height:3px;background:#c4c4c4"></div><div style="left:365px;top:362px;width:1px;height:3px;background:#c4c4c4"></div><div style="left:450px;top:362px;width:1px;height:3px;background:#c4c4c4"></div><div style="left:515px;top:362px;width:1px;height:3px;background:#c4c4c4"></div><div style="left:600px;top:362px;width:1px;height:3px;background:#c4c4c4"></div><div style="left:685px;top:362px;width:1px;height:3px;background:#c4c4c4"></div><div style="left:750px;top:362px;width:1px;height:3px;background:#c4c4c4"></div><div style="left:805px;top:362px;width:1px;height:3px;background:#c4c4c4"></div><div style="left:29.00px;top:348px;font:13px/13px 'Liberation Sans', sans-serif;color:#101010;letter-spacing:0.300px;white-space:pre;">20</div><div style="left:85.00px;top:348px;font:13px/13px 'Liberation Sans', sans-serif;color:#101010;letter-spacing:0.740px;white-space:pre;">01/24/06 01:23 AM</div><div style="left:264.75px;top:348px;font:13px/13px 'Liberation Sans', sans-serif;color:#101010;letter-spacing:0.300px;white-space:pre;">22.00</div><div style="left:327.87px;top:348px;font:13px/13px 'Liberation Sans', sans-serif;color:#101010;letter-spacing:0.400px;white-space:pre;">3 / 10</div><div style="left:414.55px;top:348px;font:13px/13px 'Liberation Sans', sans-serif;color:#101010;letter-spacing:0.300px;white-space:pre;">40.00</div><div style="left:487.09px;top:348px;font:13px/13px 'Liberation Sans', sans-serif;color:#101010;letter-spacing:0.300px;white-space:pre;">55.2</div><div style="left:589.97px;top:348px;font:13px/13px 'Liberation Sans', sans-serif;color:#101010;letter-spacing:0.000px;white-space:pre;">4</div><div style="left:627.46px;top:348px;font:13px/13px 'Liberation Sans', sans-serif;color:#101010;letter-spacing:0.400px;white-space:pre;">Turbo</div><div style="left:697.56px;top:348px;font:13px/13px 'Liberation Sans', sans-serif;color:#101010;letter-spacing:0.400px;white-space:pre;">1 Table</div><div style="left:770.14px;top:348px;font:13px/13px 'Liberation Sans', sans-serif;color:#101010;letter-spacing:0.300px;white-space:pre;">NL</div><div style="left:827.31px;top:348px;font:13px/13px 'Liberation Sans', sans-serif;color:#101010;letter-spacing:0.450px;white-space:pre;">19501474</div><div style="left:28px;top:365px;width:862px;height:15px;background:#90ee90"></div><div style="left:0px;top:381px;width:967px;height:1px;background:#cccccc"></div><div style="left:80px;top:380px;width:1px;height:3px;background:#c4c4c4"></div><div style="left:225px;top:380px;width:1px;height:3px;background:#c4c4c4"></div><div style="left:300px;top:380px;width:1px;height:3px;background:#c4c4c4"></div><div style="left:365px;top:380px;width:1px;height:3px;background:#c4c4c4"></div><div style="left:450px;top:380px;width:1px;height:3px;background:#c4c4c4"></div><div style="left:515px;top:380px;width:1px;height:3px;background:#c4c4c4"></div><div style="left:600px;top:380px;width:1px;height:3px;background:#c4c4c4"></div><div style="left:685px;top:380px;width:1px;height:3px;background:#c4c4c4"></div><div style="left:750px;top:380px;width:1px;height:3px;background:#c4c4c4"></div><div style="left:805px;top:380px;width:1px;height:3px;background:#c4c4c4"></div><div style="left:29.00px;top:366px;font:13px/13px 'Liberation Sans', sans-serif;color:#101010;letter-spacing:0.300px;white-space:pre;">21</div><div style="left:85.00px;top:366px;font:13px/13px 'Liberation Sans', sans-serif;color:#101010;letter-spacing:0.740px;white-space:pre;">01/24/06 01:24 AM</div><div style="left:264.75px;top:366px;font:13px/13px 'Liberation Sans', sans-serif;color:#101010;letter-spacing:0.300px;white-space:pre;">22.00</div><div style="left:327.87px;top:366px;font:13px/13px 'Liberation Sans', sans-serif;color:#101010;letter-spacing:0.400px;white-space:pre;">3 / 10</div><div style="left:414.55px;top:366px;font:13px/13px 'Liberation Sans', sans-serif;color:#101010;letter-spacing:0.300px;white-space:pre;">40.00</div><div style="left:487.09px;top:366px;font:13px/13px 'Liberation Sans', sans-serif;color:#101010;letter-spacing:0.300px;white-space:pre;">43.3</div><div style="left:589.97px;top:366px;font:13px/13px 'Liberation Sans', sans-serif;color:#101010;letter-spacing:0.000px;white-space:pre;">4</div><div style="left:627.46px;top:366px;font:13px/13px 'Liberation Sans', sans-serif;color:#101010;letter-spacing:0.400px;white-space:pre;">Turbo</div><div style="left:697.56px;top:366px;font:13px/13px 'Liberation Sans', sans-serif;color:#101010;letter-spacing:0.400px;white-space:pre;">1 Table</div><div style="left:770.14px;top:366px;font:13px/13px 'Liberation Sans', sans-serif;color:#101010;letter-spacing:0.300px;white-space:pre;">NL</div><div style="left:827.31px;top:366px;font:13px/13px 'Liberation Sans', sans-serif;color:#101010;letter-spacing:0.450px;white-space:pre;">19501491</div><div style="left:0px;top:399px;width:967px;height:1px;background:#cccccc"></div><div style="left:80px;top:398px;width:1px;height:3px;background:#c4c4c4"></div><div style="left:225px;top:398px;width:1px;height:3px;background:#c4c4c4"></div><div style="left:300px;top:398px;width:1px;height:3px;background:#c4c4c4"></div><div style="left:365px;top:398px;width:1px;height:3px;background:#c4c4c4"></div><div style="left:450px;top:398px;width:1px;height:3px;background:#c4c4c4"></div><div style="left:515px;top:398px;width:1px;height:3px;background:#c4c4c4"></div><div style="left:600px;top:398px;width:1px;height:3px;background:#c4c4c4"></div><div style="left:685px;top:398px;width:1px;height:3px;background:#c4c4c4"></div><div style="left:750px;top:398px;width:1px;height:3px;background:#c4c4c4"></div><div style="left:805px;top:398px;width:1px;height:3px;background:#c4c4c4"></div><div style="left:29.00px;top:384px;font:13px/13px 'Liberation Sans', sans-serif;color:#101010;letter-spacing:0.300px;white-space:pre;">22</div><div style="left:85.00px;top:384px;font:13px/13px 'Liberation Sans', sans-serif;color:#101010;letter-spacing:0.740px;white-space:pre;">01/24/06 02:09 AM</div><div style="left:264.75px;top:384px;font:13px/13px 'Liberation Sans', sans-serif;color:#101010;letter-spacing:0.300px;white-space:pre;">22.00</div><div style="left:327.87px;top:384px;font:13px/13px 'Liberation Sans', sans-serif;color:#101010;letter-spacing:0.400px;white-space:pre;">6 / 10</div><div style="left:422.09px;top:384px;font:13px/13px 'Liberation Sans', sans-serif;color:#101010;letter-spacing:0.300px;white-space:pre;">0.00</div><div style="left:487.09px;top:384px;font:13px/13px 'Liberation Sans', sans-serif;color:#101010;letter-spacing:0.300px;white-space:pre;">29.6</div><div style="left:589.97px;top:384px;font:13px/13px 'Liberation Sans', sans-serif;color:#101010;letter-spacing:0.000px;white-space:pre;">4</div><div style="left:627.46px;top:384px;font:13px/13px 'Liberation Sans', sans-serif;color:#101010;letter-spacing:0.400px;white-space:pre;">Turbo</div><div style="left:697.56px;top:384px;font:13px/13px 'Liberation Sans', sans-serif;color:#101010;letter-spacing:0.400px;white-space:pre;">1 Table</div><div style="left:770.14px;top:384px;font:13px/13px 'Liberation Sans', sans-serif;color:#101010;letter-spacing:0.300px;white-space:pre;">NL</div><div style="left:827.31px;top:384px;font:13px/13px 'Liberation Sans', sans-serif;color:#101010;letter-spacing:0.450px;white-space:pre;">19502469</div><div style="left:28px;top:401px;width:862px;height:15px;background:#90ee90"></div><div style="left:0px;top:417px;width:967px;height:1px;background:#cccccc"></div><div style="left:80px;top:416px;width:1px;height:3px;background:#c4c4c4"></div><div style="left:225px;top:416px;width:1px;height:3px;background:#c4c4c4"></div><div style="left:300px;top:416px;width:1px;height:3px;background:#c4c4c4"></div><div style="left:365px;top:416px;width:1px;height:3px;background:#c4c4c4"></div><div style="left:450px;top:416px;width:1px;height:3px;background:#c4c4c4"></div><div style="left:515px;top:416px;width:1px;height:3px;background:#c4c4c4"></div><div style="left:600px;top:416px;width:1px;height:3px;background:#c4c4c4"></div><div style="left:685px;top:416px;width:1px;height:3px;background:#c4c4c4"></div><div style="left:750px;top:416px;width:1px;height:3px;background:#c4c4c4"></div><div style="left:805px;top:416px;width:1px;height:3px;background:#c4c4c4"></div><div style="left:29.00px;top:402px;font:13px/13px 'Liberation Sans', sans-serif;color:#101010;letter-spacing:0.300px;white-space:pre;">23</div><div style="left:85.00px;top:402px;font:13px/13px 'Liberation Sans', sans-serif;color:#101010;letter-spacing:0.740px;white-space:pre;">01/24/06 02:09 AM</div><div style="left:264.75px;top:402px;font:13px/13px 'Liberation Sans', sans-serif;color:#101010;letter-spacing:0.300px;white-space:pre;">22.00</div><div style="left:327.87px;top:402px;font:13px/13px 'Liberation Sans', sans-serif;color:#101010;letter-spacing:0.400px;white-space:pre;">2 / 10</div><div style="left:414.55px;top:402px;font:13px/13px 'Liberation Sans', sans-serif;color:#101010;letter-spacing:0.300px;white-space:pre;">60.00</div><div style="left:487.09px;top:402px;font:13px/13px 'Liberation Sans', sans-serif;color:#101010;letter-spacing:0.300px;white-space:pre;">41.4</div><div style="left:589.97px;top:402px;font:13px/13px 'Liberation Sans', sans-serif;color:#101010;letter-spacing:0.000px;white-space:pre;">4</div><div style="left:627.46px;top:402px;font:13px/13px 'Liberation Sans', sans-serif;color:#101010;letter-spacing:0.400px;white-space:pre;">Turbo</div><div style="left:697.56px;top:402px;font:13px/13px 'Liberation Sans', sans-serif;color:#101010;letter-spacing:0.400px;white-space:pre;">1 Table</div><div style="left:770.14px;top:402px;font:13px/13px 'Liberation Sans', sans-serif;color:#101010;letter-spacing:0.300px;white-space:pre;">NL</div><div style="left:827.31px;top:402px;font:13px/13px 'Liberation Sans', sans-serif;color:#101010;letter-spacing:0.450px;white-space:pre;">19502474</div><div style="left:28px;top:419px;width:862px;height:15px;background:#90ee90"></div><div style="left:0px;top:435px;width:967px;height:1px;background:#cccccc"></div><div style="left:80px;top:434px;width:1px;height:3px;background:#c4c4c4"></div><div style="left:225px;top:434px;width:1px;height:3px;background:#c4c4c4"></div><div style="left:300px;top:434px;width:1px;height:3px;background:#c4c4c4"></div><div style="left:365px;top:434px;width:1px;height:3px;background:#c4c4c4"></div><div style="left:450px;top:434px;width:1px;height:3px;background:#c4c4c4"></div><div style="left:515px;top:434px;width:1px;height:3px;background:#c4c4c4"></div><div style="left:600px;top:434px;width:1px;height:3px;background:#c4c4c4"></div><div style="left:685px;top:434px;width:1px;height:3px;background:#c4c4c4"></div><div style="left:750px;top:434px;width:1px;height:3px;background:#c4c4c4"></div><div style="left:805px;top:434px;width:1px;height:3px;background:#c4c4c4"></div><div style="left:29.00px;top:420px;font:13px/13px 'Liberation Sans', sans-serif;color:#101010;letter-spacing:0.300px;white-space:pre;">24</div><div style="left:85.00px;top:420px;font:13px/13px 'Liberation Sans', sans-serif;color:#101010;letter-spacing:0.740px;white-space:pre;">01/24/06 02:09 AM</div><div style="left:264.75px;top:420px;font:13px/13px 'Liberation Sans', sans-serif;color:#101010;letter-spacing:0.300px;white-space:pre;">22.00</div><div style="left:327.87px;top:420px;font:13px/13px 'Liberation Sans', sans-serif;color:#101010;letter-spacing:0.400px;white-space:pre;">1 / 10</div><div style="left:407.03px;top:420px;font:13px/13px 'Liberation Sans', sans-serif;color:#101010;letter-spacing:0.300px;white-space:pre;">100.00</div><div style="left:487.09px;top:420px;font:13px/13px 'Liberation Sans', sans-serif;color:#101010;letter-spacing:0.300px;white-space:pre;">43.1</div><div style="left:589.97px;top:420px;font:13px/13px 'Liberation Sans', sans-serif;color:#101010;letter-spacing:0.000px;white-space:pre;">4</div><div style="left:627.46px;top:420px;font:13px/13px 'Liberation Sans', sans-serif;color:#101010;letter-spacing:0.400px;white-space:pre;">Turbo</div><div style="left:697.56px;top:420px;font:13px/13px 'Liberation Sans', sans-serif;color:#101010;letter-spacing:0.400px;white-space:pre;">1 Table</div><div style="left:770.14px;top:420px;font:13px/13px 'Liberation Sans', sans-serif;color:#101010;letter-spacing:0.300px;white-space:pre;">NL</div><div style="left:827.31px;top:420px;font:13px/13px 'Liberation Sans', sans-serif;color:#101010;letter-spacing:0.450px;white-space:pre;">19502476</div><div style="left:28px;top:437px;width:862px;height:15px;background:#90ee90"></div><div style="left:0px;top:453px;width:967px;height:1px;background:#cccccc"></div><div style="left:80px;top:452px;width:1px;height:3px;background:#c4c4c4"></div><div style="left:225px;top:452px;width:1px;height:3px;background:#c4c4c4"></div><div style="left:300px;top:452px;width:1px;height:3px;background:#c4c4c4"></div><div style="left:365px;top:452px;width:1px;height:3px;background:#c4c4c4"></div><div style="left:450px;top:452px;width:1px;height:3px;background:#c4c4c4"></div><div style="left:515px;top:452px;width:1px;height:3px;background:#c4c4c4"></div><div style="left:600px;top:452px;width:1px;height:3px;background:#c4c4c4"></div><div style="left:685px;top:452px;width:1px;height:3px;background:#c4c4c4"></div><div style="left:750px;top:452px;width:1px;height:3px;background:#c4c4c4"></div><div style="left:805px;top:452px;width:1px;height:3px;background:#c4c4c4"></div><div style="left:29.00px;top:438px;font:13px/13px 'Liberation Sans', sans-serif;color:#101010;letter-spacing:0.300px;white-space:pre;">25</div><div style="left:85.00px;top:438px;font:13px/13px 'Liberation Sans', sans-serif;color:#101010;letter-spacing:0.740px;white-space:pre;">01/24/06 02:19 AM</div><div style="left:264.75px;top:438px;font:13px/13px 'Liberation Sans', sans-serif;color:#101010;letter-spacing:0.300px;white-space:pre;">22.00</div><div style="left:327.87px;top:438px;font:13px/13px 'Liberation Sans', sans-serif;color:#101010;letter-spacing:0.400px;white-space:pre;">1 / 10</div><div style="left:407.03px;top:438px;font:13px/13px 'Liberation Sans', sans-serif;color:#101010;letter-spacing:0.300px;white-space:pre;">100.00</div><div style="left:487.09px;top:438px;font:13px/13px 'Liberation Sans', sans-serif;color:#101010;letter-spacing:0.300px;white-space:pre;">36.2</div><div style="left:589.97px;top:438px;font:13px/13px 'Liberation Sans', sans-serif;color:#101010;letter-spacing:0.000px;white-space:pre;">4</div><div style="left:627.46px;top:438px;font:13px/13px 'Liberation Sans', sans-serif;color:#101010;letter-spacing:0.400px;white-space:pre;">Turbo</div><div style="left:697.56px;top:438px;font:13px/13px 'Liberation Sans', sans-serif;color:#101010;letter-spacing:0.400px;white-space:pre;">1 Table</div><div style="left:770.14px;top:438px;font:13px/13px 'Liberation Sans', sans-serif;color:#101010;letter-spacing:0.300px;white-space:pre;">NL</div><div style="left:827.31px;top:438px;font:13px/13px 'Liberation Sans', sans-serif;color:#101010;letter-spacing:0.450px;white-space:pre;">19502660</div><div style="left:0px;top:471px;width:967px;height:1px;background:#cccccc"></div><div style="left:80px;top:470px;width:1px;height:3px;background:#c4c4c4"></div><div style="left:225px;top:470px;width:1px;height:3px;background:#c4c4c4"></div><div style="left:300px;top:470px;width:1px;height:3px;background:#c4c4c4"></div><div style="left:365px;top:470px;width:1px;height:3px;background:#c4c4c4"></div><div style="left:450px;top:470px;width:1px;height:3px;background:#c4c4c4"></div><div style="left:515px;top:470px;width:1px;height:3px;background:#c4c4c4"></div><div style="left:600px;top:470px;width:1px;height:3px;background:#c4c4c4"></div><div style="left:685px;top:470px;width:1px;height:3px;background:#c4c4c4"></div><div style="left:750px;top:470px;width:1px;height:3px;background:#c4c4c4"></div><div style="left:805px;top:470px;width:1px;height:3px;background:#c4c4c4"></div><div style="left:29.00px;top:456px;font:13px/13px 'Liberation Sans', sans-serif;color:#101010;letter-spacing:0.300px;white-space:pre;">26</div><div style="left:85.00px;top:456px;font:13px/13px 'Liberation Sans', sans-serif;color:#101010;letter-spacing:0.801px;white-space:pre;">01/25/06 02:11 AM</div><div style="left:264.75px;top:456px;font:13px/13px 'Liberation Sans', sans-serif;color:#101010;letter-spacing:0.300px;white-space:pre;">22.00</div><div style="left:327.87px;top:456px;font:13px/13px 'Liberation Sans', sans-serif;color:#101010;letter-spacing:0.400px;white-space:pre;">6 / 10</div><div style="left:422.09px;top:456px;font:13px/13px 'Liberation Sans', sans-serif;color:#101010;letter-spacing:0.300px;white-space:pre;">0.00</div><div style="left:487.09px;top:456px;font:13px/13px 'Liberation Sans', sans-serif;color:#101010;letter-spacing:0.300px;white-space:pre;">20.9</div><div style="left:589.97px;top:456px;font:13px/13px 'Liberation Sans', sans-serif;color:#101010;letter-spacing:0.000px;white-space:pre;">4</div><div style="left:627.46px;top:456px;font:13px/13px 'Liberation Sans', sans-serif;color:#101010;letter-spacing:0.400px;white-space:pre;">Turbo</div><div style="left:697.56px;top:456px;font:13px/13px 'Liberation Sans', sans-serif;color:#101010;letter-spacing:0.400px;white-space:pre;">1 Table</div><div style="left:770.14px;top:456px;font:13px/13px 'Liberation Sans', sans-serif;color:#101010;letter-spacing:0.300px;white-space:pre;">NL</div><div style="left:827.31px;top:456px;font:13px/13px 'Liberation Sans', sans-serif;color:#101010;letter-spacing:0.450px;white-space:pre;">19531415</div><div style="left:0px;top:489px;width:967px;height:1px;background:#cccccc"></div><div style="left:80px;top:488px;width:1px;height:3px;background:#c4c4c4"></div><div style="left:225px;top:488px;width:1px;height:3px;background:#c4c4c4"></div><div style="left:300px;top:488px;width:1px;height:3px;background:#c4c4c4"></div><div style="left:365px;top:488px;width:1px;height:3px;background:#c4c4c4"></div><div style="left:450px;top:488px;width:1px;height:3px;background:#c4c4c4"></div><div style="left:515px;top:488px;width:1px;height:3px;background:#c4c4c4"></div><div style="left:600px;top:488px;width:1px;height:3px;background:#c4c4c4"></div><div style="left:685px;top:488px;width:1px;height:3px;background:#c4c4c4"></div><div style="left:750px;top:488px;width:1px;height:3px;background:#c4c4c4"></div><div style="left:805px;top:488px;width:1px;height:3px;background:#c4c4c4"></div><div style="left:29.00px;top:474px;font:13px/13px 'Liberation Sans', sans-serif;color:#101010;letter-spacing:0.300px;white-space:pre;">27</div><div style="left:85.00px;top:474px;font:13px/13px 'Liberation Sans', sans-serif;color:#101010;letter-spacing:0.801px;white-space:pre;">01/25/06 02:11 AM</div><div style="left:264.75px;top:474px;font:13px/13px 'Liberation Sans', sans-serif;color:#101010;letter-spacing:0.300px;white-space:pre;">22.00</div><div style="left:327.87px;top:474px;font:13px/13px 'Liberation Sans', sans-serif;color:#101010;letter-spacing:0.400px;white-space:pre;">9 / 10</div><div style="left:422.09px;top:474px;font:13px/13px 'Liberation Sans', sans-serif;color:#101010;letter-spacing:0.300px;white-space:pre;">0.00</div><div style="left:487.09px;top:474px;font:13px/13px 'Liberation Sans', sans-serif;color:#101010;letter-spacing:0.300px;white-space:pre;">26.7</div><div style="left:589.97px;top:474px;font:13px/13px 'Liberation Sans', sans-serif;color:#101010;letter-spacing:0.000px;white-space:pre;">4</div><div style="left:627.46px;top:474px;font:13px/13px 'Liberation Sans', sans-serif;color:#101010;letter-spacing:0.400px;white-space:pre;">Turbo</div><div style="left:697.56px;top:474px;font:13px/13px 'Liberation Sans', sans-serif;color:#101010;letter-spacing:0.400px;white-space:pre;">1 Table</div><div style="left:770.14px;top:474px;font:13px/13px 'Liberation Sans', sans-serif;color:#101010;letter-spacing:0.300px;white-space:pre;">NL</div><div style="left:827.31px;top:474px;font:13px/13px 'Liberation Sans', sans-serif;color:#101010;letter-spacing:0.450px;white-space:pre;">19531419</div><div style="left:28px;top:491px;width:862px;height:15px;background:#90ee90"></div><div style="left:0px;top:507px;width:967px;height:1px;background:#cccccc"></div><div style="left:80px;top:506px;width:1px;height:3px;background:#c4c4c4"></div><div style="left:225px;top:506px;width:1px;height:3px;background:#c4c4c4"></div><div style="left:300px;top:506px;width:1px;height:3px;background:#c4c4c4"></div><div style="left:365px;top:506px;width:1px;height:3px;background:#c4c4c4"></div><div style="left:450px;top:506px;width:1px;height:3px;background:#c4c4c4"></div><div style="left:515px;top:506px;width:1px;height:3px;background:#c4c4c4"></div><div style="left:600px;top:506px;width:1px;height:3px;background:#c4c4c4"></div><div style="left:685px;top:506px;width:1px;height:3px;background:#c4c4c4"></div><div style="left:750px;top:506px;width:1px;height:3px;background:#c4c4c4"></div><div style="left:805px;top:506px;width:1px;height:3px;background:#c4c4c4"></div><div style="left:29.00px;top:492px;font:13px/13px 'Liberation Sans', sans-serif;color:#101010;letter-spacing:0.300px;white-space:pre;">28</div><div style="left:85.00px;top:492px;font:13px/13px 'Liberation Sans', sans-serif;color:#101010;letter-spacing:0.740px;white-space:pre;">01/25/06 02:12 AM</div><div style="left:264.75px;top:492px;font:13px/13px 'Liberation Sans', sans-serif;color:#101010;letter-spacing:0.300px;white-space:pre;">22.00</div><div style="left:327.87px;top:492px;font:13px/13px 'Liberation Sans', sans-serif;color:#101010;letter-spacing:0.400px;white-space:pre;">2 / 10</div><div style="left:414.55px;top:492px;font:13px/13px 'Liberation Sans', sans-serif;color:#101010;letter-spacing:0.300px;white-space:pre;">60.00</div><div style="left:487.09px;top:492px;font:13px/13px 'Liberation Sans', sans-serif;color:#101010;letter-spacing:0.300px;white-space:pre;">38.7</div><div style="left:589.97px;top:492px;font:13px/13px 'Liberation Sans', sans-serif;color:#101010;letter-spacing:0.000px;white-space:pre;">4</div><div style="left:627.46px;top:492px;font:13px/13px 'Liberation Sans', sans-serif;color:#101010;letter-spacing:0.400px;white-space:pre;">Turbo</div><div style="left:697.56px;top:492px;font:13px/13px 'Liberation Sans', sans-serif;color:#101010;letter-spacing:0.400px;white-space:pre;">1 Table</div><div style="left:770.14px;top:492px;font:13px/13px 'Liberation Sans', sans-serif;color:#101010;letter-spacing:0.300px;white-space:pre;">NL</div><div style="left:827.31px;top:492px;font:13px/13px 'Liberation Sans', sans-serif;color:#101010;letter-spacing:0.450px;white-space:pre;">19531444</div><div style="left:0px;top:525px;width:967px;height:1px;background:#cccccc"></div><div style="left:80px;top:524px;width:1px;height:3px;background:#c4c4c4"></div><div style="left:225px;top:524px;width:1px;height:3px;background:#c4c4c4"></div><div style="left:300px;top:524px;width:1px;height:3px;background:#c4c4c4"></div><div style="left:365px;top:524px;width:1px;height:3px;background:#c4c4c4"></div><div style="left:450px;top:524px;width:1px;height:3px;background:#c4c4c4"></div><div style="left:515px;top:524px;width:1px;height:3px;background:#c4c4c4"></div><div style="left:600px;top:524px;width:1px;height:3px;background:#c4c4c4"></div><div style="left:685px;top:524px;width:1px;height:3px;background:#c4c4c4"></div><div style="left:750px;top:524px;width:1px;height:3px;background:#c4c4c4"></div><div style="left:805px;top:524px;width:1px;height:3px;background:#c4c4c4"></div><div style="left:29.00px;top:510px;font:13px/13px 'Liberation Sans', sans-serif;color:#101010;letter-spacing:0.300px;white-space:pre;">29</div><div style="left:85.00px;top:510px;font:13px/13px 'Liberation Sans', sans-serif;color:#101010;letter-spacing:0.740px;white-space:pre;">01/25/06 02:13 AM</div><div style="left:264.75px;top:510px;font:13px/13px 'Liberation Sans', sans-serif;color:#101010;letter-spacing:0.300px;white-space:pre;">22.00</div><div style="left:327.87px;top:510px;font:13px/13px 'Liberation Sans', sans-serif;color:#101010;letter-spacing:0.400px;white-space:pre;">7 / 10</div><div style="left:422.09px;top:510px;font:13px/13px 'Liberation Sans', sans-serif;color:#101010;letter-spacing:0.300px;white-space:pre;">0.00</div><div style="left:487.09px;top:510px;font:13px/13px 'Liberation Sans', sans-serif;color:#101010;letter-spacing:0.300px;white-space:pre;">29.3</div><div style="left:589.97px;top:510px;font:13px/13px 'Liberation Sans', sans-serif;color:#101010;letter-spacing:0.000px;white-space:pre;">4</div><div style="left:627.46px;top:510px;font:13px/13px 'Liberation Sans', sans-serif;color:#101010;letter-spacing:0.400px;white-space:pre;">Turbo</div><div style="left:697.56px;top:510px;font:13px/13px 'Liberation Sans', sans-serif;color:#101010;letter-spacing:0.400px;white-space:pre;">1 Table</div><div style="left:770.14px;top:510px;font:13px/13px 'Liberation Sans', sans-serif;color:#101010;letter-spacing:0.300px;white-space:pre;">NL</div><div style="left:827.31px;top:510px;font:13px/13px 'Liberation Sans', sans-serif;color:#101010;letter-spacing:0.450px;white-space:pre;">19531450</div><div style="left:0px;top:543px;width:967px;height:1px;background:#cccccc"></div><div style="left:80px;top:542px;width:1px;height:3px;background:#c4c4c4"></div><div style="left:225px;top:542px;width:1px;height:3px;background:#c4c4c4"></div><div style="left:300px;top:542px;width:1px;height:3px;background:#c4c4c4"></div><div style="left:365px;top:542px;width:1px;height:3px;background:#c4c4c4"></div><div style="left:450px;top:542px;width:1px;height:3px;background:#c4c4c4"></div><div style="left:515px;top:542px;width:1px;height:3px;background:#c4c4c4"></div><div style="left:600px;top:542px;width:1px;height:3px;background:#c4c4c4"></div><div style="left:685px;top:542px;width:1px;height:3px;background:#c4c4c4"></div><div style="left:750px;top:542px;width:1px;height:3px;background:#c4c4c4"></div><div style="left:805px;top:542px;width:1px;height:3px;background:#c4c4c4"></div><div style="left:29.00px;top:528px;font:13px/13px 'Liberation Sans', sans-serif;color:#101010;letter-spacing:0.300px;white-space:pre;">30</div><div style="left:85.00px;top:528px;font:13px/13px 'Liberation Sans', sans-serif;color:#101010;letter-spacing:0.740px;white-space:pre;">01/25/06 02:33 AM</div><div style="left:264.75px;top:528px;font:13px/13px 'Liberation Sans', sans-serif;color:#101010;letter-spacing:0.300px;white-space:pre;">22.00</div><div style="left:327.87px;top:528px;font:13px/13px 'Liberation Sans', sans-serif;color:#101010;letter-spacing:0.400px;white-space:pre;">4 / 10</div><div style="left:422.09px;top:528px;font:13px/13px 'Liberation Sans', sans-serif;color:#101010;letter-spacing:0.300px;white-space:pre;">0.00</div><div style="left:487.09px;top:528px;font:13px/13px 'Liberation Sans', sans-serif;color:#101010;letter-spacing:0.300px;white-space:pre;">35.8</div><div style="left:589.97px;top:528px;font:13px/13px 'Liberation Sans', sans-serif;color:#101010;letter-spacing:0.000px;white-space:pre;">4</div><div style="left:627.46px;top:528px;font:13px/13px 'Liberation Sans', sans-serif;color:#101010;letter-spacing:0.400px;white-space:pre;">Turbo</div><div style="left:697.56px;top:528px;font:13px/13px 'Liberation Sans', sans-serif;color:#101010;letter-spacing:0.400px;white-space:pre;">1 Table</div><div style="left:770.14px;top:528px;font:13px/13px 'Liberation Sans', sans-serif;color:#101010;letter-spacing:0.300px;white-space:pre;">NL</div><div style="left:827.31px;top:528px;font:13px/13px 'Liberation Sans', sans-serif;color:#101010;letter-spacing:0.450px;white-space:pre;">19531780</div><div style="left:0px;top:561px;width:967px;height:1px;background:#cccccc"></div><div style="left:80px;top:560px;width:1px;height:3px;background:#c4c4c4"></div><div style="left:225px;top:560px;width:1px;height:3px;background:#c4c4c4"></div><div style="left:300px;top:560px;width:1px;height:3px;background:#c4c4c4"></div><div style="left:365px;top:560px;width:1px;height:3px;background:#c4c4c4"></div><div style="left:450px;top:560px;width:1px;height:3px;background:#c4c4c4"></div><div style="left:515px;top:560px;width:1px;height:3px;background:#c4c4c4"></div><div style="left:600px;top:560px;width:1px;height:3px;background:#c4c4c4"></div><div style="left:685px;top:560px;width:1px;height:3px;background:#c4c4c4"></div><div style="left:750px;top:560px;width:1px;height:3px;background:#c4c4c4"></div><div style="left:805px;top:560px;width:1px;height:3px;background:#c4c4c4"></div><div style="left:29.00px;top:546px;font:13px/13px 'Liberation Sans', sans-serif;color:#101010;letter-spacing:0.300px;white-space:pre;">31</div><div style="left:85.00px;top:546px;font:13px/13px 'Liberation Sans', sans-serif;color:#101010;letter-spacing:0.740px;white-space:pre;">01/25/06 03:10 AM</div><div style="left:264.75px;top:546px;font:13px/13px 'Liberation Sans', sans-serif;color:#101010;letter-spacing:0.300px;white-space:pre;">22.00</div><div style="left:327.87px;top:546px;font:13px/13px 'Liberation Sans', sans-serif;color:#101010;letter-spacing:0.400px;white-space:pre;">6 / 10</div><div style="left:422.09px;top:546px;font:13px/13px 'Liberation Sans', sans-serif;color:#101010;letter-spacing:0.300px;white-space:pre;">0.00</div><div style="left:487.09px;top:546px;font:13px/13px 'Liberation Sans', sans-serif;color:#101010;letter-spacing:0.300px;white-space:pre;">27.5</div><div style="left:589.97px;top:546px;font:13px/13px 'Liberation Sans', sans-serif;color:#101010;letter-spacing:0.000px;white-space:pre;">4</div><div style="left:627.46px;top:546px;font:13px/13px 'Liberation Sans', sans-serif;color:#101010;letter-spacing:0.400px;white-space:pre;">Turbo</div><div style="left:697.56px;top:546px;font:13px/13px 'Liberation Sans', sans-serif;color:#101010;letter-spacing:0.400px;white-space:pre;">1 Table</div><div style="left:770.14px;top:546px;font:13px/13px 'Liberation Sans', sans-serif;color:#101010;letter-spacing:0.300px;white-space:pre;">NL</div><div style="left:827.31px;top:546px;font:13px/13px 'Liberation Sans', sans-serif;color:#101010;letter-spacing:0.450px;white-space:pre;">19532278</div><div style="left:28px;top:563px;width:862px;height:15px;background:#90ee90"></div><div style="left:0px;top:579px;width:967px;height:1px;background:#cccccc"></div><div style="left:80px;top:578px;width:1px;height:3px;background:#c4c4c4"></div><div style="left:225px;top:578px;width:1px;height:3px;background:#c4c4c4"></div><div style="left:300px;top:578px;width:1px;height:3px;background:#c4c4c4"></div><div style="left:365px;top:578px;width:1px;height:3px;background:#c4c4c4"></div><div style="left:450px;top:578px;width:1px;height:3px;background:#c4c4c4"></div><div style="left:515px;top:578px;width:1px;height:3px;background:#c4c4c4"></div><div style="left:600px;top:578px;width:1px;height:3px;background:#c4c4c4"></div><div style="left:685px;top:578px;width:1px;height:3px;background:#c4c4c4"></div><div style="left:750px;top:578px;width:1px;height:3px;background:#c4c4c4"></div><div style="left:805px;top:578px;width:1px;height:3px;background:#c4c4c4"></div><div style="left:29.00px;top:564px;font:13px/13px 'Liberation Sans', sans-serif;color:#101010;letter-spacing:0.300px;white-space:pre;">32</div><div style="left:85.00px;top:564px;font:13px/13px 'Liberation Sans', sans-serif;color:#101010;letter-spacing:0.740px;white-space:pre;">01/25/06 03:10 AM</div><div style="left:264.75px;top:564px;font:13px/13px 'Liberation Sans', sans-serif;color:#101010;letter-spacing:0.300px;white-space:pre;">22.00</div><div style="left:327.87px;top:564px;font:13px/13px 'Liberation Sans', sans-serif;color:#101010;letter-spacing:0.400px;white-space:pre;">3 / 10</div><div style="left:414.55px;top:564px;font:13px/13px 'Liberation Sans', sans-serif;color:#101010;letter-spacing:0.300px;white-space:pre;">40.00</div><div style="left:487.09px;top:564px;font:13px/13px 'Liberation Sans', sans-serif;color:#101010;letter-spacing:0.300px;white-space:pre;">36.4</div><div style="left:589.97px;top:564px;font:13px/13px 'Liberation Sans', sans-serif;color:#101010;letter-spacing:0.000px;white-space:pre;">4</div><div style="left:627.46px;top:564px;font:13px/13px 'Liberation Sans', sans-serif;color:#101010;letter-spacing:0.400px;white-space:pre;">Turbo</div><div style="left:697.56px;top:564px;font:13px/13px 'Liberation Sans', sans-serif;color:#101010;letter-spacing:0.400px;white-space:pre;">1 Table</div><div style="left:770.14px;top:564px;font:13px/13px 'Liberation Sans', sans-serif;color:#101010;letter-spacing:0.300px;white-space:pre;">NL</div><div style="left:827.31px;top:564px;font:13px/13px 'Liberation Sans', sans-serif;color:#101010;letter-spacing:0.450px;white-space:pre;">19532279</div><div style="left:28px;top:581px;width:862px;height:15px;background:#90ee90"></div><div style="left:0px;top:597px;width:967px;height:1px;background:#cccccc"></div><div style="left:80px;top:596px;width:1px;height:3px;background:#c4c4c4"></div><div style="left:225px;top:596px;width:1px;height:3px;background:#c4c4c4"></div><div style="left:300px;top:596px;width:1px;height:3px;background:#c4c4c4"></div><div style="left:365px;top:596px;width:1px;height:3px;background:#c4c4c4"></div><div style="left:450px;top:596px;width:1px;height:3px;background:#c4c4c4"></div><div style="left:515px;top:596px;width:1px;height:3px;background:#c4c4c4"></div><div style="left:600px;top:596px;width:1px;height:3px;background:#c4c4c4"></div><div style="left:685px;top:596px;width:1px;height:3px;background:#c4c4c4"></div><div style="left:750px;top:596px;width:1px;height:3px;background:#c4c4c4"></div><div style="left:805px;top:596px;width:1px;height:3px;background:#c4c4c4"></div><div style="left:29.00px;top:582px;font:13px/13px 'Liberation Sans', sans-serif;color:#101010;letter-spacing:0.300px;white-space:pre;">33</div><div style="left:85.00px;top:582px;font:13px/13px 'Liberation Sans', sans-serif;color:#101010;letter-spacing:0.740px;white-space:pre;">01/25/06 03:10 AM</div><div style="left:264.75px;top:582px;font:13px/13px 'Liberation Sans', sans-serif;color:#101010;letter-spacing:0.300px;white-space:pre;">22.00</div><div style="left:327.87px;top:582px;font:13px/13px 'Liberation Sans', sans-serif;color:#101010;letter-spacing:0.400px;white-space:pre;">3 / 10</div><div style="left:414.55px;top:582px;font:13px/13px 'Liberation Sans', sans-serif;color:#101010;letter-spacing:0.300px;white-space:pre;">40.00</div><div style="left:487.09px;top:582px;font:13px/13px 'Liberation Sans', sans-serif;color:#101010;letter-spacing:0.300px;white-space:pre;">30.5</div><div style="left:589.97px;top:582px;font:13px/13px 'Liberation Sans', sans-serif;color:#101010;letter-spacing:0.000px;white-space:pre;">4</div><div style="left:627.46px;top:582px;font:13px/13px 'Liberation Sans', sans-serif;color:#101010;letter-spacing:0.400px;white-space:pre;">Turbo</div><div style="left:697.56px;top:582px;font:13px/13px 'Liberation Sans', sans-serif;color:#101010;letter-spacing:0.400px;white-space:pre;">1 Table</div><div style="left:770.14px;top:582px;font:13px/13px 'Liberation Sans', sans-serif;color:#101010;letter-spacing:0.300px;white-space:pre;">NL</div><div style="left:827.31px;top:582px;font:13px/13px 'Liberation Sans', sans-serif;color:#101010;letter-spacing:0.450px;white-space:pre;">19532284</div></div>
</body></html>
